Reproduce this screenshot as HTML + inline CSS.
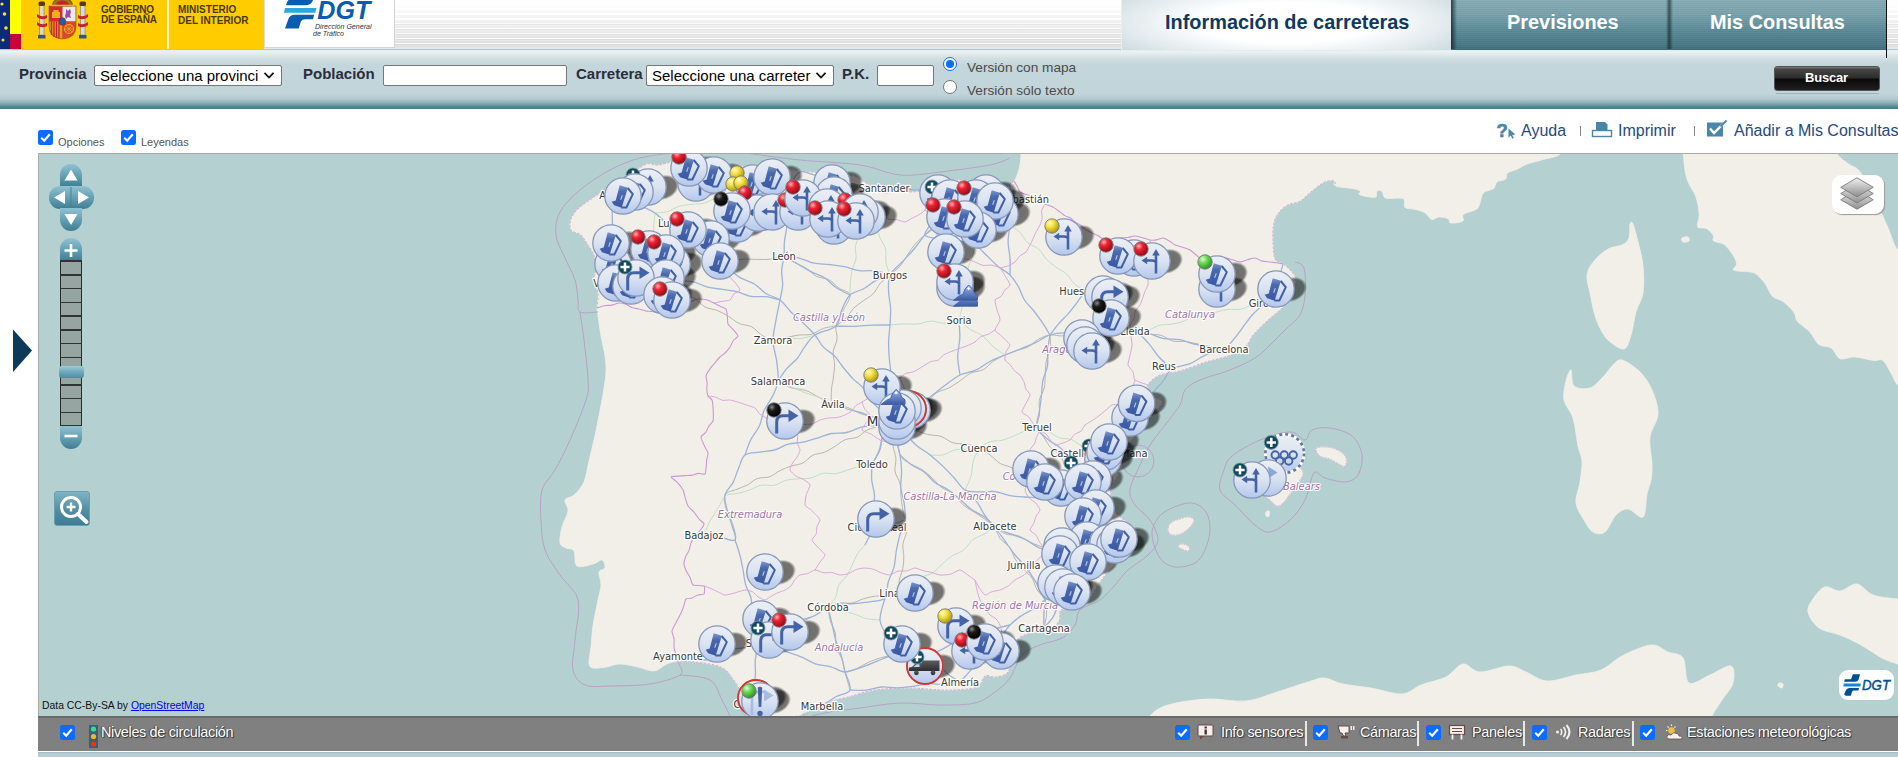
<!DOCTYPE html>
<html lang="es"><head><meta charset="utf-8"><title>DGT - Información de carreteras</title>
<style>
*{box-sizing:border-box;margin:0;padding:0}
html,body{width:1898px;height:757px;overflow:hidden;background:#fff;font-family:"Liberation Sans",Arial,sans-serif;}
.abs{position:absolute}
#hdr{position:absolute;left:0;top:0;width:1898px;height:49px;background:linear-gradient(180deg,rgba(255,255,255,1) 0px,rgba(255,255,255,.85) 10px,rgba(255,255,255,0) 46px),repeating-linear-gradient(180deg,#cfcfcf 0px,#e4e4e4 1.1px,#dcdcdc 3.3px,#fbfbfb 3.6px,#fbfbfb 4.9px);}
#hdrline{left:0;top:48px;width:1898px;height:2px;background:linear-gradient(180deg,#f4f4f4,#a9c5cc)}
#eu{left:0;top:0;width:10px;height:49px;background:#0a2a7a}
#yel1{left:10px;top:0;width:11px;height:34px;background:#ffff00}
#red1{left:10px;top:34px;width:11px;height:15px;background:#c8033a}
#gob{left:21px;top:0;width:243px;height:49px;background:#ffcc00}
#gobdiv{left:167px;top:0;width:2px;height:49px;background:#fff3c0}
.gtxt{font-size:10px;line-height:10.5px;color:#4a3a08;font-weight:bold;letter-spacing:-0.2px;white-space:nowrap}
#dgtbox{left:264px;top:0;width:131px;height:48px;background:#fff;border-right:1px solid #d4d4d4;border-bottom:1px solid #d4d4d4;border-left:1px solid #ddd}
#band{left:0;top:49px;width:1898px;height:60px;background:linear-gradient(180deg,#a9c5cc 0px,#b5cdd3 1px,#eef3f5 1.6px,#e6eef0 4px,#d3e0e4 9px,#c4d6db 16px,#c2d5da 44px,#b4cad0 50px,#7fa5b0 55px,#4f8190 58px,#4a7d8c 60px)}
#tabA{left:1121px;top:0;width:330px;height:50px;background:radial-gradient(ellipse 60% 90% at 50% 45%,#ffffff 0%,#ffffff 45%,#e3ebee 80%,#cfdde1 100%);border-left:1px solid #e8eef0}
.tabtxt{font-weight:bold;font-size:19.9px;white-space:nowrap;line-height:22px}
#tabB{left:1451px;top:0;width:435px;height:50px;background:linear-gradient(180deg,#8ab0b9 0%,#7ba4ae 30%,#5f8e9b 60%,#4d7b88 90%,#456f7c 100%)}
#tabBstripes{left:1451px;top:0;width:435px;height:50px;background:repeating-linear-gradient(180deg,rgba(255,255,255,0) 0px,rgba(255,255,255,0) 1px,rgba(0,0,0,0.05) 1px,rgba(0,0,0,0.05) 2px)}
.lbl{font-weight:bold;font-size:15px;color:#2b2d3b;white-space:nowrap;line-height:17px}
.sel{background:#fff;border:1px solid #767676;border-radius:2px;font-size:15px;color:#000;white-space:nowrap;overflow:hidden;line-height:19px;padding-left:5px}
.inp{background:#fff;border:1px solid #767676;border-radius:2px}
.rad{width:14px;height:14px;border-radius:50%;background:#fff;border:1px solid #767676}
.radtxt{font-size:13.65px;color:#4a4a4a;white-space:nowrap;line-height:16px}
.cb{width:15px;height:15px;border-radius:2.5px;background:#0b6cff}
.smalltxt{font-size:11px;color:#555;white-space:nowrap;line-height:12px}
.lnk{font-size:16px;color:#234a84;white-space:nowrap;line-height:18px}
#bbar{left:38px;top:716px;width:1860px;height:35px;background:#808080;border-top:2px solid #6a6a6a}
.btxt{font-size:14.4px;color:#fff;white-space:nowrap;line-height:16px;text-shadow:1px 1px 1px #333, -1px 0 1px #444;letter-spacing:-0.32px}
.bsep{width:2px;height:25px;top:721px;background:#e8e8e8}
#strip{left:38px;top:752px;width:1860px;height:5px;background:linear-gradient(180deg,#9db5bb 0px,#b3cbd1 1.5px,#b9d0d5 5px)}
</style></head>
<body>
<div id="hdr"></div><div class="abs" id="hdrline"></div>
<div class="abs" id="eu"></div><div class="abs" id="yel1"></div><div class="abs" id="red1"></div>
<div class="abs" id="gob"></div><div class="abs" id="gobdiv"></div>
<svg class="abs" style="left:0;top:0" width="10" height="49" viewBox="0 0 10 49"><g fill="#ffdd33"><circle cx="2" cy="4" r="1.6"/><circle cx="4.5" cy="14" r="1.8"/><circle cx="6" cy="28" r="1.8"/><circle cx="3" cy="40" r="1.5"/></g></svg>
<svg class="abs" style="left:36px;top:0" width="54" height="42" viewBox="0 0 54 42">
<g>
<rect x="3.5" y="5" width="4.5" height="30" fill="#d9d9d9" stroke="#777" stroke-width=".6"/>
<rect x="44.5" y="5" width="4.5" height="30" fill="#d9d9d9" stroke="#777" stroke-width=".6"/>
<rect x="2" y="35" width="7.5" height="3.5" fill="#2f5590"/><rect x="43" y="35" width="7.5" height="3.5" fill="#2f5590"/>
<rect x="2.5" y="1.5" width="6.5" height="4.5" rx="1.5" fill="#5a3a10"/><rect x="43.5" y="1.5" width="6.5" height="4.5" rx="1.5" fill="#5a3a10"/>
<path d="M1 14 Q6 18 11 15 L11 18 Q6 21 1 17Z" fill="#c8202e"/><path d="M1 22 Q6 26 11 23 L11 26 Q6 29 1 25Z" fill="#c8202e"/>
<path d="M42 15 Q47 18 52 14 L52 17 Q47 21 42 18Z" fill="#c8202e"/><path d="M42 23 Q47 26 52 22 L52 25 Q47 29 42 26Z" fill="#c8202e"/>
<path d="M13 6 H40 V26 Q40 38 26.5 39 Q13 38 13 26Z" fill="#d33" stroke="#8a6a1a" stroke-width=".7"/>
<rect x="13.5" y="6.5" width="13" height="15" fill="#d42a2a"/>
<rect x="26.5" y="6.5" width="13" height="15" fill="#ece7ee"/>
<path d="M13.5 21.5 H26.5 V38.5 Q14 37 13.5 26Z" fill="#e0a020"/>
<path d="M15.5 21.5V35 M18 21.5V37 M20.5 21.5V38 M23 21.5V38.5" stroke="#c8202e" stroke-width="1.3"/>
<path d="M26.5 21.5 H39.5 V26 Q39 37 26.5 38.5Z" fill="#d8482a"/>
<circle cx="33" cy="29" r="4.5" fill="none" stroke="#e8b020" stroke-width="1.2"/>
<path d="M29 29H37M33 25V33M30 26L36 32M36 26L30 32" stroke="#e8b020" stroke-width=".7"/>
<path d="M17.5 10 h5 v2 h1.5 v6 h-8 v-6 h1.5z" fill="#e8b020"/>
<path d="M30 9 l2 2 2-2 1 3 -1 3 1 3 -3-1 -2 2 -1-3 1-3z" fill="#9a4aa0"/>
<ellipse cx="26.5" cy="21.5" rx="3.2" ry="3.8" fill="#2a5aa8" stroke="#8a1a1a" stroke-width=".6"/>
<path d="M17 6 Q15 -1 26.5 -2 Q38 -1 36 6Z" fill="#9a7418" stroke="#6a4a10" stroke-width=".7"/><path d="M20 5 Q20 1 26.5 0.5 Q33 1 33 5Z" fill="#c8202e"/>
<path d="M15.5 5.5H37.5" stroke="#e8b020" stroke-width="1.6"/>
</g></svg>
<div class="abs gtxt" style="left:101px;top:5px;line-height:10.1px">GOBIERNO<br>DE ESPAÑA</div>
<div class="abs gtxt" style="left:178px;top:3.5px;line-height:11.8px;letter-spacing:0">MINISTERIO<br>DEL INTERIOR</div>
<div class="abs" id="dgtbox"></div>
<svg class="abs" style="left:264px;top:0" width="131" height="48" viewBox="0 0 131 48">
<path d="M22.5 0 H49 Q47.5 5.3 41 5.3 H22 Q22.5 2 24.5 0Z" fill="#0a5cb0"/>
<path d="M21 8.1 H52.4 L51.3 12.7 H19.9Z" fill="#29a9e0"/>
<path d="M50.2 14.8 H31 Q25.5 15 24.3 19.2 L21 28.4 H34.7 L36.9 21.4 Q38 19.2 41.3 19.2 H49Z" fill="#0a5cb0"/>
<text x="53.3" y="19.3" font-family="Liberation Sans,Arial,sans-serif" font-weight="bold" font-style="italic" font-size="25" fill="#0a5cb0" textLength="53" lengthAdjust="spacingAndGlyphs">DGT</text>
<text x="51" y="28.6" font-family="Liberation Sans,Arial,sans-serif" font-style="italic" font-size="7" fill="#333" textLength="56.5" lengthAdjust="spacingAndGlyphs">Dirección General</text>
<text x="49" y="36" font-family="Liberation Sans,Arial,sans-serif" font-style="italic" font-size="7" fill="#333" textLength="31" lengthAdjust="spacingAndGlyphs">de Tráfico</text>
</svg>
<div class="abs" id="band"></div>
<div class="abs" id="tabA"></div>
<div class="abs tabtxt" style="left:1165px;top:11px;color:#0f3a5c">Información de carreteras</div>
<div class="abs" id="tabB"></div><div class="abs" id="tabBstripes"></div>
<div class="abs" style="left:1451px;top:0;width:6px;height:49px;background:linear-gradient(90deg,rgba(10,25,30,.75),rgba(10,25,30,0))"></div>
<div class="abs" style="left:1666px;top:0;width:7px;height:49px;background:linear-gradient(90deg,rgba(10,25,30,0),rgba(10,25,30,.6) 45%,rgba(10,25,30,0))"></div>
<div class="abs" style="left:1886px;top:0;width:1px;height:58px;background:#111"></div>
<div class="abs tabtxt" style="left:1507px;top:11px;color:#fff">Previsiones</div>
<div class="abs tabtxt" style="left:1710px;top:11px;color:#fff">Mis Consultas</div>
<div class="abs lbl" style="left:19px;top:65px">Provincia</div>
<div class="abs sel" style="left:94px;top:65px;width:188px;height:21px">Seleccione una provinci</div>
<svg class="abs" style="left:263px;top:71px" width="12" height="9" viewBox="0 0 12 9"><path d="M1.5 1.8 L6 6.5 L10.5 1.8" fill="none" stroke="#111" stroke-width="1.8"/></svg>
<div class="abs lbl" style="left:303px;top:65px">Población</div>
<div class="abs inp" style="left:383px;top:65px;width:184px;height:21px"></div>
<div class="abs lbl" style="left:576px;top:65px">Carretera</div>
<div class="abs sel" style="left:646px;top:65px;width:188px;height:21px">Seleccione una carreter</div>
<svg class="abs" style="left:815px;top:71px" width="12" height="9" viewBox="0 0 12 9"><path d="M1.5 1.8 L6 6.5 L10.5 1.8" fill="none" stroke="#111" stroke-width="1.8"/></svg>
<div class="abs lbl" style="left:842px;top:65px">P.K.</div>
<div class="abs inp" style="left:877px;top:65px;width:57px;height:21px"></div>
<div class="abs rad" style="left:943px;top:57px;border:1.5px solid #0b6cff"><div class="abs" style="left:1.5px;top:1.5px;width:8px;height:8px;border-radius:50%;background:#0b6cff"></div></div>
<div class="abs rad" style="left:943px;top:80px"></div>
<div class="abs radtxt" style="left:967px;top:60px">Versión con mapa</div>
<div class="abs radtxt" style="left:967px;top:83px">Versión sólo texto</div>
<div class="abs" style="left:1774px;top:66px;width:106px;height:25px;border-radius:3px;border:1px solid #555;background:linear-gradient(180deg,#7c7c7c 0%,#454545 10%,#2c2c2c 48%,#0a0a0a 52%,#1e1e1e 100%)"></div>
<div class="abs" style="left:1776px;top:93px;width:103px;height:1px;background:#9fb2b8"></div>
<div class="abs" style="left:1805px;top:70px;font-weight:bold;font-size:13px;color:#fff;line-height:16px;letter-spacing:-0.2px">Buscar</div>
<div class="abs cb" style="left:38px;top:130px"><svg class="abs" style="left:0;top:0" width="15" height="15" viewBox="0 0 15 15"><path d="M3.2 7.8 L6.2 10.8 L11.8 4.2" fill="none" stroke="#fff" stroke-width="2.1" stroke-linecap="butt" stroke-linejoin="miter"/></svg></div>
<div class="abs smalltxt" style="left:58px;top:136px">Opciones</div>
<div class="abs cb" style="left:121px;top:130px"><svg class="abs" style="left:0;top:0" width="15" height="15" viewBox="0 0 15 15"><path d="M3.2 7.8 L6.2 10.8 L11.8 4.2" fill="none" stroke="#fff" stroke-width="2.1" stroke-linecap="butt" stroke-linejoin="miter"/></svg></div>
<div class="abs smalltxt" style="left:141px;top:136px">Leyendas</div>
<svg class="abs" style="left:1496px;top:121px" width="22" height="19" viewBox="0 0 22 19">
<text x="0.5" y="15.8" font-family="Liberation Sans,Arial,sans-serif" font-weight="bold" font-size="18.5" fill="#4a86a8" stroke="#4a86a8" stroke-width="0.6">?</text>
<path d="M12.5 7.5 L12.5 16.5 L14.8 14.6 L16.3 17.8 L17.8 17.1 L16.3 14 L19.3 13.6Z" fill="#4a86a8"/></svg>
<div class="abs lnk" style="left:1521px;top:122px">Ayuda</div>
<div class="abs" style="left:1580px;top:126px;width:1px;height:10px;background:#888"></div>
<svg class="abs" style="left:1591px;top:121px" width="22" height="17" viewBox="0 0 22 17">
<path d="M5 1 H14 L16.5 3.5 V9 H5Z" fill="#4a86a8"/><rect x="1.5" y="9.5" width="19" height="6" fill="#fff" stroke="#4a86a8" stroke-width="1.4"/></svg>
<div class="abs lnk" style="left:1618px;top:122px">Imprimir</div>
<div class="abs" style="left:1694px;top:126px;width:1px;height:10px;background:#888"></div>
<svg class="abs" style="left:1706px;top:120px" width="23" height="18" viewBox="0 0 23 18">
<rect x="1" y="2.5" width="16" height="14" fill="#4a86a8"/><path d="M4 8.5 L8 13 L20 1" fill="none" stroke="#fff" stroke-width="2.4"/><path d="M14.5 6.5 L20.5 .5" fill="none" stroke="#4a86a8" stroke-width="2"/></svg>
<div class="abs lnk" style="left:1734px;top:122px">Añadir a Mis Consultas</div>
<svg class="abs" style="left:12px;top:328px" width="22" height="46" viewBox="0 0 22 46"><path d="M1 1.5 L20 22.5 L1 44Z" fill="#0e3a5a"/></svg>
<svg class="abs" style="left:38px;top:153px" width="1860" height="563" viewBox="38 153 1860 563">

<defs>
<linearGradient id="mg" x1="0" y1="0" x2="0" y2="1"><stop offset="0" stop-color="#eceff5"/><stop offset="0.5" stop-color="#dbe3f1"/><stop offset="1" stop-color="#b3c7ed"/></linearGradient>
<radialGradient id="shg" cx="0.5" cy="0.5" r="0.5"><stop offset="0" stop-color="#000" stop-opacity=".55"/><stop offset="0.8" stop-color="#000" stop-opacity=".52"/><stop offset="1" stop-color="#000" stop-opacity="0"/></radialGradient>
<radialGradient id="br" cx="0.35" cy="0.3" r="0.75"><stop offset="0" stop-color="#ffb0b0"/><stop offset="0.35" stop-color="#ee2233"/><stop offset="1" stop-color="#8a0a14"/></radialGradient>
<radialGradient id="by" cx="0.35" cy="0.3" r="0.75"><stop offset="0" stop-color="#fffbc0"/><stop offset="0.4" stop-color="#f3df40"/><stop offset="1" stop-color="#a8900c"/></radialGradient>
<radialGradient id="bk" cx="0.35" cy="0.3" r="0.75"><stop offset="0" stop-color="#8a8a8a"/><stop offset="0.35" stop-color="#1a1a1a"/><stop offset="1" stop-color="#000"/></radialGradient>
<radialGradient id="bg" cx="0.35" cy="0.3" r="0.75"><stop offset="0" stop-color="#d8ffd0"/><stop offset="0.4" stop-color="#6ad850"/><stop offset="1" stop-color="#2a8a20"/></radialGradient>
<linearGradient id="iwg" gradientUnits="userSpaceOnUse" x1="0" y1="-11" x2="0" y2="12"><stop offset="0" stop-color="#7f97cc"/><stop offset="0.3" stop-color="#4a69ae"/><stop offset="1" stop-color="#3a58a2"/></linearGradient>
<linearGradient id="trg" x1="0" y1="0" x2="0" y2="1"><stop offset="0" stop-color="#5a5c5e"/><stop offset="1" stop-color="#2c2d2f"/></linearGradient>
<linearGradient id="mtg" x1="0" y1="0" x2="0" y2="1"><stop offset="0" stop-color="#a9bce4"/><stop offset="0.45" stop-color="#6f8bc8"/><stop offset="1" stop-color="#3b5aa4"/></linearGradient>
<g id="sh"><ellipse cx="15" cy="0.5" rx="16.5" ry="12.2" fill="url(#shg)" transform="rotate(-20 15 0.5)"/></g>
<g id="mk"><circle r="18.2" fill="url(#mg)" stroke="#8797b7" stroke-width="1.3"/></g>
<g id="iw"><path d="M-3.3 -10.8 L4.9 -8.2 L-0.5 9 L-1.3 11.7 L-8.9 9.3 L-11.3 5.7 L-7.3 4.6 Z" fill="url(#iwg)"/><path d="M4.7 -8 L9.8 -1.9 L3.4 11.5 L-1.7 11.5" fill="none" stroke="#4060a6" stroke-width="2" stroke-linejoin="round"/><path d="M-0.7 -0.8 L-2.3 3.8" stroke="#b9c8e8" stroke-width="1.1"/></g>
<g id="ij" fill="none" stroke="#4463a6" stroke-width="2.6"><path d="M4 12.5 V-6.5"/><path d="M4 2 Q4 -0.5 0 -0.5 H-6"/><path d="M4 -12 L7.8 -5.5 H0.2Z" fill="#4463a6" stroke="none"/><path d="M-10.5 -0.5 L-4.8 -4.3 V3.3Z" fill="#4463a6" stroke="none"/></g>
<g id="ir" fill="none" stroke="#4463a6" stroke-width="3"><path d="M-8.3 12.5 V1 Q-8.3 -5.2 -2 -5.2 H5"/><path d="M13.5 -5.2 L3.5 -11.5 V1Z" fill="#4463a6" stroke="none"/></g>
<g id="iu" fill="none" stroke="#4463a6" stroke-width="2.6"><path d="M2 12 V-6"/><path d="M2 -12 L5.8 -5.5 H-1.8Z" fill="#4463a6" stroke="none"/></g>
<g id="ir2" fill="#8fa6d8"><path d="M0 -11.5 L9.5 -5.5 L1.5 -0.5Z"/></g>
<g id="pl"><circle r="7" fill="#0f4a60" stroke="#7f9494" stroke-width="0.8"/><path d="M-4.6 0H4.6M0 -4.6V4.6" stroke="#fff" stroke-width="2.5"/></g>
<g id="mt"><path d="M0 15.2 L5.6 10.9 L9.6 9.2 L11.6 4 L15.2 0 L19.5 4.6 L20.8 8 L24 10.5 V15.2Z" fill="url(#mtg)" stroke="#3f5ea8" stroke-width="0.9" stroke-linejoin="round"/><path d="M12.8 4.3 L15.2 1.8 L17.8 4.6 L16.2 4 L15 5.4 L14 4Z" fill="#f4f7fc"/></g>
</defs>

<rect x="38" y="153" width="1860" height="563" fill="#b5d0d0"/>
<path d="M1565 135 C1521.6 129.4 1390.7 120 1300 120 C1209.3 120 1067.5 129.2 1021 135 C974.5 140.8 1021.3 149.3 1021 155 C1020.7 160.7 1020.2 164.7 1019 169 C1017.8 173.3 1016.3 178.2 1014 181 C1011.7 183.8 1008.2 186.2 1005 186 C1001.8 185.8 998.3 180.5 995 180 C991.7 179.5 989.2 182.8 985 183 C980.8 183.2 975 181.5 970 181 C965 180.5 960 179.7 955 180 C950 180.3 945 181.3 940 183 C935 184.7 930 188.5 925 190 C920 191.5 914.5 192 910 192 C905.5 192 902 189.8 898 190 C894 190.2 890.7 193.7 886 193 C881.3 192.3 873.8 188 870 186 C866.2 184 865.8 182.7 863 181 C860.2 179.3 858.5 177.3 853 176 C847.5 174.7 837.2 173.7 830 173 C822.8 172.3 816.5 172.5 810 172 C803.5 171.5 797.7 171 791 170 C784.3 169 776.8 166.3 770 166 C763.2 165.7 755.8 168.2 750 168 C744.2 167.8 740 165.3 735 165 C730 164.7 725 166.8 720 166 C715 165.2 710 161.3 705 160 C700 158.7 694.2 158.7 690 158 C685.8 157.3 682.8 155.5 680 156 C677.2 156.5 676.7 159.5 673 161 C669.3 162.5 662.3 164.5 658 165 C653.7 165.5 650.8 163 647 164 C643.2 165 638.7 169 635 171 C631.3 173 628.3 174 625 176 C621.7 178 619.2 180.2 615 183 C610.8 185.8 604.2 190.2 600 193 C595.8 195.8 593.7 197.3 590 200 C586.3 202.7 581.2 205.8 578 209 C574.8 212.2 572.2 215.5 571 219 C569.8 222.5 569.3 227.3 571 230 C572.7 232.7 578.2 232.5 581 235 C583.8 237.5 585.8 241.7 588 245 C590.2 248.3 592.7 251.2 594 255 C595.3 258.8 596 263.8 596 268 C596 272.2 593.7 275.8 594 280 C594.3 284.2 597.5 288.3 598 293 C598.5 297.7 597 304.2 597 308 C597 311.8 597.3 311.3 598 316 C598.7 320.7 599.8 329.3 601 336 C602.2 342.7 604.2 350 605 356 C605.8 362 606.2 366.7 606 372 C605.8 377.3 604.7 383.3 604 388 C603.3 392.7 603 394.5 602 400 C601 405.5 599.3 414.3 598 421 C596.7 427.7 595.5 433.3 594 440 C592.5 446.7 590.7 454 589 461 C587.3 468 586.5 476.3 584 482 C581.5 487.7 577.2 492 574 495 C570.8 498 566 497.3 565 500 C564 502.7 568.5 506.5 568 511 C567.5 515.5 563.3 521.7 562 527 C560.7 532.3 559.3 539.5 560 543 C560.7 546.5 563.7 546.7 566 548 C568.3 549.3 572.2 548 574 551 C575.8 554 573.8 563.8 577 566 C580.2 568.2 588.8 565 593 564 C597.2 563 600 559.3 602 560 C604 560.7 605.5 566 605 568 C604.5 570 599.7 569.2 599 572 C598.3 574.8 601.2 580.3 601 585 C600.8 589.7 599.3 593.2 598 600 C596.7 606.8 594.2 618.2 593 626 C591.8 633.8 591.7 640.8 591 647 C590.3 653.2 588.7 659.5 589 663 C589.3 666.5 590.2 667.3 593 668 C595.8 668.7 601.5 667.7 606 667 C610.5 666.3 614.7 664 620 664 C625.3 664 632.3 665.8 638 667 C643.7 668.2 649.2 671.5 654 671 C658.8 670.5 662.7 665.7 667 664 C671.3 662.3 673.8 661.2 680 661 C686.2 660.8 696.8 661.8 704 663 C711.2 664.2 718.2 665.3 723 668 C727.8 670.7 730.3 675.5 733 679 C735.7 682.5 737.7 685.2 739 689 C740.3 692.8 739.5 697.5 741 702 C742.5 706.5 746.2 710.5 748 716 C749.8 721.5 743.7 731.8 752 735 C760.3 738.2 790 738.2 798 735 C806 731.8 797.7 720.2 800 716 C802.3 711.8 807.3 712.3 812 710 C816.7 707.7 822 704.2 828 702 C834 699.8 840.2 699 848 697 C855.8 695 864.7 691.5 875 690 C885.3 688.5 898.8 688 910 688 C921.2 688 932.5 689.8 942 690 C951.5 690.2 960.8 689.7 967 689 C973.2 688.3 976 688.2 979 686 C982 683.8 982.2 677.5 985 676 C987.8 674.5 992.2 677.7 996 677 C999.8 676.3 1005.3 675.7 1008 672 C1010.7 668.3 1010.5 660.3 1012 655 C1013.5 649.7 1014 643.7 1017 640 C1020 636.3 1024.7 634.5 1030 633 C1035.3 631.5 1044.2 633 1049 631 C1053.8 629 1057 624.5 1059 621 C1061 617.5 1058.3 612.2 1061 610 C1063.7 607.8 1070.2 610 1075 608 C1079.8 606 1086.2 601.8 1090 598 C1093.8 594.2 1095.2 589.2 1098 585 C1100.8 580.8 1103.3 577.2 1107 573 C1110.7 568.8 1115.3 564.2 1120 560 C1124.7 555.8 1131.7 551.7 1135 548 C1138.3 544.3 1140.7 541.7 1140 538 C1139.3 534.3 1134.8 530 1131 526 C1127.2 522 1120.3 517.8 1117 514 C1113.7 510.2 1112 507.3 1111 503 C1110 498.7 1110 492.3 1111 488 C1112 483.7 1115.2 481.3 1117 477 C1118.8 472.7 1120.2 467.3 1122 462 C1123.8 456.7 1124.5 450.8 1128 445 C1131.5 439.2 1138.7 432.3 1143 427 C1147.3 421.7 1150.8 417.2 1154 413 C1157.2 408.8 1162.3 405 1162 402 C1161.7 399 1154.3 397.8 1152 395 C1149.7 392.2 1146.7 388.3 1148 385 C1149.3 381.7 1154.7 377.3 1160 375 C1165.3 372.7 1172.3 373.2 1180 371 C1187.7 368.8 1197.5 364.7 1206 362 C1214.5 359.3 1224.3 357.7 1231 355 C1237.7 352.3 1242.3 349.3 1246 346 C1249.7 342.7 1249.5 339.2 1253 335 C1256.5 330.8 1262 325.7 1267 321 C1272 316.3 1279.2 311.3 1283 307 C1286.8 302.7 1287.8 299.5 1290 295 C1292.2 290.5 1296 284.2 1296 280 C1296 275.8 1292.2 272.7 1290 270 C1287.8 267.3 1285.5 265.8 1283 264 C1280.5 262.2 1276.7 263.1 1275 259 C1273.3 254.9 1273.1 245.2 1272.9 239.3 C1272.7 233.5 1272.9 228.2 1273.7 223.9 C1274.5 219.6 1275.7 216.8 1278 213.6 C1280.3 210.4 1283.9 207 1287.5 205 C1291.1 203 1295.8 203.5 1299.5 201.5 C1303.2 199.5 1305.8 196.1 1309.8 192.9 C1313.8 189.8 1319.6 184.6 1323.6 182.6 C1327.6 180.6 1331.9 180.3 1333.9 180.9 C1335.9 181.5 1332.4 184.8 1335.6 186.1 C1338.8 187.4 1348.6 187.8 1352.8 188.6 C1357 189.4 1359.4 190.2 1360.5 191.2 C1361.6 192.2 1357.2 193.7 1359.6 194.7 C1362 195.7 1372.2 197.8 1375.1 197.2 C1378 196.6 1375.6 192.2 1376.8 191.2 C1378 190.2 1380.6 190 1382 191.2 C1383.4 192.3 1382.6 196.9 1385.4 198.1 C1388.2 199.2 1395.9 197.8 1399.1 198.1 C1402.2 198.4 1403.3 198.2 1404.3 199.8 C1405.3 201.4 1403.4 205.9 1405.1 207.5 C1406.8 209.1 1411.3 208.4 1414.6 209.3 C1417.9 210.2 1422 211 1424.9 212.7 C1427.8 214.4 1429.5 218.9 1431.8 219.6 C1434.1 220.3 1435.9 217.2 1438.6 217 C1441.3 216.8 1446.1 217.7 1448.1 218.7 C1450.1 219.7 1448.3 222.6 1450.7 223 C1453.1 223.4 1460.6 222.7 1462.7 221.3 C1464.8 219.9 1461.2 216.4 1463.5 214.4 C1465.8 212.4 1473.7 211.2 1476.4 209.3 C1479.1 207.4 1478.8 205.9 1479.9 203.2 C1481.1 200.5 1481 195.3 1483.3 192.9 C1485.6 190.5 1491.3 190.4 1493.6 188.6 C1495.9 186.8 1495 183.4 1497 181.8 C1499 180.2 1503.9 180.6 1505.6 179.2 C1507.3 177.8 1505.3 174.9 1507.3 173.2 C1509.3 171.5 1514.2 170.5 1517.6 168.9 C1521 167.3 1523.6 165.3 1527.9 163.7 C1532.2 162.1 1538 161.1 1543.4 159.4 C1548.9 157.7 1557 157.5 1560.6 153.4 C1564.2 149.3 1608.4 140.6 1565 135Z" fill="#f2efe9" stroke="#f2efe9" stroke-width="0.8" stroke-linejoin="round"/>
<path d="M1680 135 C1655.5 138.1 1681.9 146.3 1683 153.6 C1684.1 160.8 1684.7 171.4 1686.8 178.5 C1688.9 185.6 1693.6 190.5 1695.7 196.4 C1697.8 202.3 1698.9 209.1 1699.2 214.2 C1699.5 219.2 1696.3 224.3 1697.5 226.7 C1698.7 229.1 1703.7 227 1706.4 228.5 C1709.1 230 1712.3 233.5 1713.5 235.6 C1714.7 237.7 1711.7 239.5 1713.5 241 C1715.3 242.5 1720.9 242.1 1724.2 244.5 C1727.5 246.9 1731 251.9 1733.1 255.2 C1735.2 258.5 1736.7 261.8 1736.7 264.2 C1736.7 266.6 1732.5 268.3 1733.1 269.5 C1733.7 270.7 1736.7 270.7 1740.3 271.3 C1743.9 271.9 1750.3 271 1754.5 273.1 C1758.7 275.2 1762.2 279.9 1765.2 283.8 C1768.2 287.7 1769.4 293.3 1772.4 296.3 C1775.4 299.3 1779.5 298.9 1783.1 301.6 C1786.7 304.3 1791.4 309 1793.8 312.3 C1796.2 315.6 1794.7 317.9 1797.4 321.2 C1800.1 324.5 1806.2 328.1 1809.8 332 C1813.4 335.9 1815.2 341.7 1818.8 344.4 C1822.4 347.1 1827.6 345.6 1831.2 348 C1834.8 350.4 1836.3 357.2 1840.2 358.7 C1844.1 360.2 1848.8 356.6 1854.4 356.9 C1860 357.2 1869.2 359.9 1874 360.5 C1878.8 361.1 1880 358.1 1883 360.5 C1886 362.9 1889.4 370.6 1891.9 374.8 C1894.4 379 1894.2 381.3 1898 385.5 C1901.8 389.7 1912.2 421.8 1915 400 C1917.8 378.2 1917.8 280 1915 255 C1912.2 230 1902.5 254.4 1898 250 C1893.5 245.6 1892.3 237.4 1888.3 228.5 C1884.3 219.6 1878.8 205.9 1874 196.4 C1869.2 186.9 1864 176.8 1859.8 171.4 C1855.6 166.1 1853 167.3 1849.1 164.3 C1845.2 161.3 1839.8 158.5 1836.6 153.6 C1833.4 148.7 1856.1 138.1 1830 135 C1803.9 131.9 1704.5 131.9 1680 135Z" fill="#f2efe9" stroke="#f2efe9" stroke-width="0.8" stroke-linejoin="round"/>
<path d="M1140 735 C1047.5 731.8 1145.3 721 1150 716 C1154.7 711 1158.5 707.8 1168 705 C1177.5 702.2 1194 699.7 1207 699 C1220 698.3 1234.3 702.2 1246 701 C1257.7 699.8 1266.7 695.2 1277 692 C1287.3 688.8 1300.2 684.3 1308 682 C1315.8 679.7 1318.2 677.7 1324 678 C1329.8 678.3 1335.2 682.3 1343 684 C1350.8 685.7 1361.2 686.3 1371 688 C1380.8 689.7 1393.7 694.5 1402 694 C1410.3 693.5 1413.7 687.8 1421 685 C1428.3 682.2 1439 680.5 1446 677 C1453 673.5 1457.3 664.8 1463 664 C1468.7 663.2 1472.3 671.7 1480 672 C1487.7 672.3 1501.3 666 1509 666 C1516.7 666 1519.7 669.5 1526 672 C1532.3 674.5 1538.7 680.5 1547 681 C1555.3 681.5 1567 676.8 1576 675 C1585 673.2 1593.3 673.2 1601 670 C1608.7 666.8 1613.7 660.2 1622 656 C1630.3 651.8 1643.3 645.7 1651 645 C1658.7 644.3 1662.7 649.8 1668 652 C1673.3 654.2 1679.5 652.8 1683 658 C1686.5 663.2 1684.5 680.2 1689 683 C1693.5 685.8 1703 677.8 1710 675 C1717 672.2 1727.2 664.7 1731 666 C1734.8 667.3 1734.5 677.3 1733 683 C1731.5 688.7 1725.5 694.5 1722 700 C1718.5 705.5 1714.8 710.2 1712 716 C1709.2 721.8 1800.3 731.8 1705 735 C1609.7 738.2 1232.5 738.2 1140 735Z" fill="#f2efe9" stroke="#f2efe9" stroke-width="0.8" stroke-linejoin="round"/>
<path d="M1915 600 C1912.2 588.5 1905 599.8 1898 599 C1891 598.2 1879.8 597.5 1873 595 C1866.2 592.5 1862.5 584.7 1857 584 C1851.5 583.3 1845.3 590.5 1840 591 C1834.7 591.5 1829.5 585.7 1825 587 C1820.5 588.3 1815.8 594.8 1813 599 C1810.2 603.2 1807 607.2 1808 612 C1809 616.8 1813.7 624.2 1819 628 C1824.3 631.8 1833 632.2 1840 635 C1847 637.8 1854 641.2 1861 645 C1868 648.8 1875.8 654.8 1882 658 C1888.2 661.2 1892.5 662.3 1898 664 C1903.5 665.7 1912.2 678.7 1915 668 C1917.8 657.3 1917.8 611.5 1915 600Z" fill="#f2efe9" stroke="#f2efe9" stroke-width="0.8" stroke-linejoin="round"/>
<path d="M1633 224 C1634.3 227 1636.3 235 1638 242 C1639.7 249 1642.2 257.5 1643 266 C1643.8 274.5 1644.2 285.3 1643 293 C1641.8 300.7 1638 305 1636 312 C1634 319 1633 328.8 1631 335 C1629 341.2 1627.8 348.2 1624 349 C1620.2 349.8 1612.2 343.8 1608 340 C1603.8 336.2 1601.3 330.7 1599 326 C1596.7 321.3 1595.5 317.5 1594 312 C1592.5 306.5 1591.2 299.2 1590 293 C1588.8 286.8 1586.3 280.3 1587 275 C1587.7 269.7 1590.5 265.3 1594 261 C1597.5 256.7 1603.3 251.7 1608 249 C1612.7 246.3 1618.5 246.8 1622 245 C1625.5 243.2 1627.7 241.5 1629 238 C1630.3 234.5 1629.3 226.3 1630 224 C1630.7 221.7 1631.7 221 1633 224Z" fill="#f2efe9" stroke="#f2efe9" stroke-width="0.8" stroke-linejoin="round"/>
<path d="M1622 360 C1626.5 361.2 1635 367 1640 372 C1645 377 1649 383 1652 390 C1655 397 1658.3 406.2 1658 414 C1657.7 421.8 1651 428.7 1650 437 C1649 445.3 1651.8 456.8 1652 464 C1652.2 471.2 1651.8 475 1651 480 C1650.2 485 1648.3 487.8 1647 494 C1645.7 500.2 1646.2 514.5 1643 517 C1639.8 519.5 1632.5 509.3 1628 509 C1623.5 508.7 1619.8 511.2 1616 515 C1612.2 518.8 1608.8 529.2 1605 532 C1601.2 534.8 1596.5 534 1593 532 C1589.5 530 1586.8 524.8 1584 520 C1581.2 515.2 1576.7 509.3 1576 503 C1575.3 496.7 1579 489 1580 482 C1581 475 1582.3 467 1582 461 C1581.7 455 1579.5 453.2 1578 446 C1576.5 438.8 1575.3 425.7 1573 418 C1570.7 410.3 1565.2 406.2 1564 400 C1562.8 393.8 1564.8 386 1566 381 C1567.2 376 1569.7 369.2 1571 370 C1572.3 370.8 1570.8 383 1574 386 C1577.2 389 1585.2 389.5 1590 388 C1594.8 386.5 1599.2 380.8 1603 377 C1606.8 373.2 1609.8 367.8 1613 365 C1616.2 362.2 1617.5 358.8 1622 360Z" fill="#f2efe9" stroke="#f2efe9" stroke-width="0.8" stroke-linejoin="round"/>
<path d="M1238 487 C1238 484.3 1241.7 480.8 1245 478 C1248.3 475.2 1253.5 472.7 1258 470 C1262.5 467.3 1267.5 464.3 1272 462 C1276.5 459.7 1281 457.2 1285 456 C1289 454.8 1294.7 453.8 1296 455 C1297.3 456.2 1292.5 461.2 1293 463 C1293.5 464.8 1297.3 464.2 1299 466 C1300.7 467.8 1303.3 471 1303 474 C1302.7 477 1299.2 480.7 1297 484 C1294.8 487.3 1292.3 490.8 1290 494 C1287.7 497.2 1285.2 501 1283 503 C1280.8 505 1279.2 506.5 1277 506 C1274.8 505.5 1272.5 502 1270 500 C1267.5 498 1264.3 495.5 1262 494 C1259.7 492.5 1257.7 490.7 1256 491 C1254.3 491.3 1253.8 495.5 1252 496 C1250.2 496.5 1247.3 495.5 1245 494 C1242.7 492.5 1238 489.7 1238 487Z" fill="#f2efe9" stroke="#f2efe9" stroke-width="0.8" stroke-linejoin="round"/>
<path d="M1316 449 C1316.3 447.5 1319.3 447.2 1322 447 C1324.7 446.8 1328.8 447.2 1332 448 C1335.2 448.8 1338.7 450.3 1341 452 C1343.3 453.7 1345.3 455.7 1346 458 C1346.7 460.3 1346.2 465 1345 466 C1343.8 467 1341.5 465.2 1339 464 C1336.5 462.8 1333.2 460.3 1330 459 C1326.8 457.7 1322.3 457.7 1320 456 C1317.7 454.3 1315.7 450.5 1316 449Z" fill="#f2efe9" stroke="#f2efe9" stroke-width="0.8" stroke-linejoin="round"/>
<path d="M1168 528 C1168.3 526 1170 523.5 1172 522 C1174 520.5 1177.3 519.8 1180 519 C1182.7 518.2 1185.7 516.8 1188 517 C1190.3 517.2 1193.7 518.3 1194 520 C1194.3 521.7 1191.7 525 1190 527 C1188.3 529 1186.2 530.7 1184 532 C1181.8 533.3 1179.3 534.7 1177 535 C1174.7 535.3 1171.5 535.2 1170 534 C1168.5 532.8 1167.7 530 1168 528Z" fill="#f2efe9" stroke="#f2efe9" stroke-width="0.8" stroke-linejoin="round"/>
<path d="M1178 546 C1178.2 545.2 1181.2 543.8 1183 544 C1184.8 544.2 1188.2 545.8 1189 547 C1189.8 548.2 1189.2 550.7 1188 551 C1186.8 551.3 1183.7 549.8 1182 549 C1180.3 548.2 1177.8 546.8 1178 546Z" fill="#f2efe9" stroke="#f2efe9" stroke-width="0.8" stroke-linejoin="round"/>
<path d="M1682 238 C1682.8 237.2 1686.8 236.5 1688 237 C1689.2 237.5 1689.8 240.2 1689 241 C1688.2 241.8 1684.2 242.5 1683 242 C1681.8 241.5 1681.2 238.8 1682 238Z" fill="#f2efe9" stroke="#f2efe9" stroke-width="0.8" stroke-linejoin="round"/>
<path d="M1779 683 C1779.8 682.7 1782.5 683.2 1783 684 C1783.5 684.8 1782.8 687.7 1782 688 C1781.2 688.3 1778.5 686.8 1778 686 C1777.5 685.2 1778.2 683.3 1779 683Z" fill="#f2efe9" stroke="#f2efe9" stroke-width="0.8" stroke-linejoin="round"/>
<path d="M1266 512 C1266.5 511.2 1268.5 510.3 1269 511 C1269.5 511.7 1269.5 515.2 1269 516 C1268.5 516.8 1266.5 516.7 1266 516 C1265.5 515.3 1265.5 512.8 1266 512Z" fill="#f2efe9" stroke="#f2efe9" stroke-width="0.8" stroke-linejoin="round"/>
<path d="M673 153 C667.5 153.8 650.5 155.2 640 158 C629.5 160.8 620 164.7 610 170 C600 175.3 588.3 183 580 190 C571.7 197 564 204.5 560 212 C556 219.5 555.2 227.3 556 235 C556.8 242.7 561.8 250.5 565 258 C568.2 265.5 572.8 273 575 280 C577.2 287 577.2 294.7 578 300 C578.8 305.3 576.7 310 580 312 C583.3 314 595 312 598 312" fill="none" stroke="#b89cc4" stroke-width="0.9" stroke-linejoin="round"/>
<path d="M580 312 C580.7 316.7 582.7 328.7 584 340 C585.3 351.3 587.7 370 588 380 C588.3 390 589 390 586 400 C583 410 575.2 428.3 570 440 C564.8 451.7 559.7 461.7 555 470 C550.3 478.3 544.3 481.7 542 490 C539.7 498.3 540.5 510 541 520 C541.5 530 541.8 540.8 545 550 C548.2 559.2 554.5 566.7 560 575 C565.5 583.3 575.5 589.2 578 600 C580.5 610.8 575.8 628.3 575 640 C574.2 651.7 571.3 662.5 573 670 C574.7 677.5 578.8 682.3 585 685 C591.2 687.7 599.2 686.2 610 686 C620.8 685.8 638.3 685.8 650 684 C661.7 682.2 675.2 678.3 680 675 C684.8 671.7 679.2 665.8 679 664" fill="none" stroke="#b89cc4" stroke-width="0.9" stroke-linejoin="round"/>
<path d="M680 675 C685 675.8 703 675.8 710 680 C717 684.2 718.7 694 722 700 C725.3 706 728.7 713.3 730 716" fill="none" stroke="#b89cc4" stroke-width="0.9" stroke-linejoin="round"/>
<path d="M812 716 C815 715.3 822 713.3 830 712 C838 710.7 848.3 709.5 860 708 C871.7 706.5 886.7 703.5 900 703 C913.3 702.5 927.5 705 940 705 C952.5 705 965.8 705.2 975 703 C984.2 700.8 989.2 696.2 995 692 C1000.8 687.8 1005.5 684.2 1010 678 C1014.5 671.8 1017 660.5 1022 655 C1027 649.5 1033.3 647.8 1040 645 C1046.7 642.2 1056.2 641.3 1062 638 C1067.8 634.7 1072 629.7 1075 625 C1078 620.3 1075.8 614.2 1080 610 C1084.2 605.8 1094.2 604.2 1100 600 C1105.8 595.8 1110.3 590 1115 585 C1119.7 580 1122.5 575 1128 570 C1133.5 565 1143 560 1148 555 C1153 550 1157.7 545.8 1158 540 C1158.3 534.2 1153.8 525.8 1150 520 C1146.2 514.2 1138.3 510 1135 505 C1131.7 500 1129.2 496.7 1130 490 C1130.8 483.3 1136.7 472.5 1140 465 C1143.3 457.5 1145.8 451.7 1150 445 C1154.2 438.3 1160 431.7 1165 425 C1170 418.3 1176.7 410.8 1180 405 C1183.3 399.2 1181.7 394.2 1185 390 C1188.3 385.8 1192.5 383.3 1200 380 C1207.5 376.7 1220.8 373.7 1230 370 C1239.2 366.3 1248.3 362.2 1255 358 C1261.7 353.8 1265 349.7 1270 345 C1275 340.3 1280 335 1285 330 C1290 325 1296.7 320.8 1300 315 C1303.3 309.2 1304.3 302.8 1305 295 C1305.7 287.2 1305.7 273.5 1304 268 C1302.3 262.5 1296.5 263 1295 262" fill="none" stroke="#b89cc4" stroke-width="0.9" stroke-linejoin="round"/>
<path d="M673 153 L700 150" fill="none" stroke="#b89cc4" stroke-width="0.9" stroke-linejoin="round"/>
<path d="M745 153 C754.2 154.2 780.8 158 800 160 C819.2 162 843.3 162.5 860 165 C876.7 167.5 886.7 173.8 900 175 C913.3 176.2 925 173.7 940 172 C955 170.3 978.3 167.3 990 165 C1001.7 162.7 1006.7 159.2 1010 158" fill="none" stroke="#b89cc4" stroke-width="0.9" stroke-linejoin="round"/>
<path d="M1224 470 C1226 464.3 1226 461 1232 456 C1238 451 1250.3 444 1260 440 C1269.7 436 1282.5 432 1290 432 C1297.5 432 1301.3 440.3 1305 440 C1308.7 439.7 1307.8 432 1312 430 C1316.2 428 1323.3 427 1330 428 C1336.7 429 1346.7 431.5 1352 436 C1357.3 440.5 1361 448.5 1362 455 C1363 461.5 1360.8 470.5 1358 475 C1355.2 479.5 1350.5 481.5 1345 482 C1339.5 482.5 1330.2 479.5 1325 478 C1319.8 476.5 1317.3 469.3 1314 473 C1310.7 476.7 1309 492.2 1305 500 C1301 507.8 1295.8 514.7 1290 520 C1284.2 525.3 1275.8 531.2 1270 532 C1264.2 532.8 1260.8 529.5 1255 525 C1249.2 520.5 1240.8 510.8 1235 505 C1229.2 499.2 1221.8 495.8 1220 490 C1218.2 484.2 1222 475.7 1224 470Z" fill="none" stroke="#b89cc4" stroke-width="0.9" stroke-linejoin="round"/>
<path d="M1152 535 C1151.7 528.3 1154.7 522.5 1158 518 C1161.3 513.5 1166.3 510.5 1172 508 C1177.7 505.5 1186.3 502.3 1192 503 C1197.7 503.7 1203 507.5 1206 512 C1209 516.5 1210.2 523.7 1210 530 C1209.8 536.3 1207.5 544.5 1205 550 C1202.5 555.5 1200 560.2 1195 563 C1190 565.8 1180.8 567.8 1175 567 C1169.2 566.2 1163.8 563.3 1160 558 C1156.2 552.7 1152.3 541.7 1152 535Z" fill="none" stroke="#b89cc4" stroke-width="0.9" stroke-linejoin="round"/>
<circle cx="1138" cy="461" r="16" fill="none" stroke="#b89cc4" stroke-width="0.9"/>
<path d="M1238 487 C1238 484.3 1241.7 480.8 1245 478 C1248.3 475.2 1253.5 472.7 1258 470 C1262.5 467.3 1267.5 464.3 1272 462 C1276.5 459.7 1281 457.2 1285 456 C1289 454.8 1294.7 453.8 1296 455 C1297.3 456.2 1292.5 461.2 1293 463 C1293.5 464.8 1297.3 464.2 1299 466 C1300.7 467.8 1303.3 471 1303 474 C1302.7 477 1299.2 480.7 1297 484 C1294.8 487.3 1292.3 490.8 1290 494 C1287.7 497.2 1285.2 501 1283 503 C1280.8 505 1279.2 506.5 1277 506 C1274.8 505.5 1272.5 502 1270 500 C1267.5 498 1264.3 495.5 1262 494 C1259.7 492.5 1257.7 490.7 1256 491 C1254.3 491.3 1253.8 495.5 1252 496 C1250.2 496.5 1247.3 495.5 1245 494 C1242.7 492.5 1238 489.7 1238 487Z" fill="none" stroke="#cfa3cf" stroke-width="0.7" stroke-dasharray="2 1"/>
<path d="M1316 449 C1316.3 447.5 1319.3 447.2 1322 447 C1324.7 446.8 1328.8 447.2 1332 448 C1335.2 448.8 1338.7 450.3 1341 452 C1343.3 453.7 1345.3 455.7 1346 458 C1346.7 460.3 1346.2 465 1345 466 C1343.8 467 1341.5 465.2 1339 464 C1336.5 462.8 1333.2 460.3 1330 459 C1326.8 457.7 1322.3 457.7 1320 456 C1317.7 454.3 1315.7 450.5 1316 449Z" fill="none" stroke="#cfa3cf" stroke-width="0.7" stroke-dasharray="2 1"/>
<path d="M1168 528 C1168.3 526 1170 523.5 1172 522 C1174 520.5 1177.3 519.8 1180 519 C1182.7 518.2 1185.7 516.8 1188 517 C1190.3 517.2 1193.7 518.3 1194 520 C1194.3 521.7 1191.7 525 1190 527 C1188.3 529 1186.2 530.7 1184 532 C1181.8 533.3 1179.3 534.7 1177 535 C1174.7 535.3 1171.5 535.2 1170 534 C1168.5 532.8 1167.7 530 1168 528Z" fill="none" stroke="#cfa3cf" stroke-width="0.7" stroke-dasharray="2 1"/>
<path d="M1178 546 C1178.2 545.2 1181.2 543.8 1183 544 C1184.8 544.2 1188.2 545.8 1189 547 C1189.8 548.2 1189.2 550.7 1188 551 C1186.8 551.3 1183.7 549.8 1182 549 C1180.3 548.2 1177.8 546.8 1178 546Z" fill="none" stroke="#cfa3cf" stroke-width="0.7" stroke-dasharray="2 1"/>
<path d="M1014 181 C1012.5 181.8 1008.2 186.2 1005 186 C1001.8 185.8 998.3 180.5 995 180 C991.7 179.5 989.2 182.8 985 183 C980.8 183.2 975 181.5 970 181 C965 180.5 960 179.7 955 180 C950 180.3 945 181.3 940 183 C935 184.7 930 188.5 925 190 C920 191.5 914.5 192 910 192 C905.5 192 902 189.8 898 190 C894 190.2 890.7 193.7 886 193 C881.3 192.3 873.8 188 870 186 C866.2 184 865.8 182.7 863 181 C860.2 179.3 858.5 177.3 853 176 C847.5 174.7 837.2 173.7 830 173 C822.8 172.3 816.5 172.5 810 172 C803.5 171.5 797.7 171 791 170 C784.3 169 776.8 166.3 770 166 C763.2 165.7 755.8 168.2 750 168 C744.2 167.8 740 165.3 735 165 C730 164.7 725 166.8 720 166 C715 165.2 710 161.3 705 160 C700 158.7 694.2 158.7 690 158 C685.8 157.3 682.8 155.5 680 156 C677.2 156.5 676.7 159.5 673 161 C669.3 162.5 662.3 164.5 658 165 C653.7 165.5 650.8 163 647 164 C643.2 165 638.7 169 635 171 C631.3 173 628.3 174 625 176 C621.7 178 619.2 180.2 615 183 C610.8 185.8 604.2 190.2 600 193 C595.8 195.8 593.7 197.3 590 200 C586.3 202.7 581.2 205.8 578 209 C574.8 212.2 572.2 215.5 571 219 C569.8 222.5 569.3 227.3 571 230 C572.7 232.7 578.2 232.5 581 235 C583.8 237.5 585.8 241.7 588 245 C590.2 248.3 592.7 251.2 594 255 C595.3 258.8 596 263.8 596 268 C596 272.2 593.7 275.8 594 280 C594.3 284.2 597.5 288.3 598 293 C598.5 297.7 597.2 305.5 597 308" fill="none" stroke="#d39ad6" stroke-width="0.8" stroke-dasharray="2.5 1.5"/>
<path d="M680 661 C684 661.3 696.8 661.8 704 663 C711.2 664.2 718.2 665.3 723 668 C727.8 670.7 730.3 675.5 733 679 C735.7 682.5 737.7 685.2 739 689 C740.3 692.8 739.5 697.5 741 702 C742.5 706.5 738.2 713.7 748 716 C757.8 718.3 789.3 717 800 716 C810.7 715 807.3 712.3 812 710 C816.7 707.7 822 704.2 828 702 C834 699.8 840.2 699 848 697 C855.8 695 864.7 691.5 875 690 C885.3 688.5 898.8 688 910 688 C921.2 688 932.5 689.8 942 690 C951.5 690.2 960.8 689.7 967 689 C973.2 688.3 976 688.2 979 686 C982 683.8 982.2 677.5 985 676 C987.8 674.5 992.2 677.7 996 677 C999.8 676.3 1005.3 675.7 1008 672 C1010.7 668.3 1010.5 660.3 1012 655 C1013.5 649.7 1014 643.7 1017 640 C1020 636.3 1024.7 634.5 1030 633 C1035.3 631.5 1044.2 633 1049 631 C1053.8 629 1057 624.5 1059 621 C1061 617.5 1058.3 612.2 1061 610 C1063.7 607.8 1070.2 610 1075 608 C1079.8 606 1086.2 601.8 1090 598 C1093.8 594.2 1095.2 589.2 1098 585 C1100.8 580.8 1103.3 577.2 1107 573 C1110.7 568.8 1115.3 564.2 1120 560 C1124.7 555.8 1131.7 551.7 1135 548 C1138.3 544.3 1140.7 541.7 1140 538 C1139.3 534.3 1134.8 530 1131 526 C1127.2 522 1120.3 517.8 1117 514 C1113.7 510.2 1112 507.3 1111 503 C1110 498.7 1110 492.3 1111 488 C1112 483.7 1115.2 481.3 1117 477 C1118.8 472.7 1120.2 467.3 1122 462 C1123.8 456.7 1124.5 450.8 1128 445 C1131.5 439.2 1138.7 432.3 1143 427 C1147.3 421.7 1150.8 417.2 1154 413 C1157.2 408.8 1162.3 405 1162 402 C1161.7 399 1154.3 397.8 1152 395 C1149.7 392.2 1146.7 388.3 1148 385 C1149.3 381.7 1154.7 377.3 1160 375 C1165.3 372.7 1172.3 373.2 1180 371 C1187.7 368.8 1197.5 364.7 1206 362 C1214.5 359.3 1224.3 357.7 1231 355 C1237.7 352.3 1242.3 349.3 1246 346 C1249.7 342.7 1249.5 339.2 1253 335 C1256.5 330.8 1262 325.7 1267 321 C1272 316.3 1279.2 311.3 1283 307 C1286.8 302.7 1287.8 299.5 1290 295 C1292.2 290.5 1296 284.2 1296 280 C1296 275.8 1292.2 272.7 1290 270 C1287.8 267.3 1284.2 265 1283 264" fill="none" stroke="#d39ad6" stroke-width="0.8" stroke-dasharray="2.5 1.5"/>
<path d="M1283 264 C1281.7 263.2 1276.7 263.1 1275 259 C1273.3 254.9 1273.1 245.2 1272.9 239.3 C1272.7 233.5 1272.9 228.2 1273.7 223.9 C1274.5 219.6 1275.7 216.8 1278 213.6 C1280.3 210.4 1283.9 207 1287.5 205 C1291.1 203 1295.8 203.5 1299.5 201.5 C1303.2 199.5 1305.8 196.1 1309.8 192.9 C1313.8 189.8 1319.6 184.6 1323.6 182.6 C1327.6 180.6 1331.9 180.3 1333.9 180.9 C1335.9 181.5 1335.3 185.2 1335.6 186.1" fill="none" stroke="#d39ad6" stroke-width="0.8" stroke-dasharray="2.5 1.5"/>
<path d="M890 422 C887.6 421.2 880.7 418.3 875.9 417 C871.1 415.7 865.9 415.6 861.2 414 C856.5 412.4 852.3 409.2 847.6 407.5 C842.9 405.8 835.7 406.8 833 404 C830.3 401.2 831.4 395.2 831.4 390.9 C831.4 386.6 832.8 382.3 833.3 378 C833.8 373.7 834.6 369.4 834.6 365 C834.6 360.6 832.8 356.2 833.2 351.9 C833.6 347.6 836.6 343.4 837.1 339.1 C837.6 334.8 835 330.8 836 326 C837 321.2 840.9 315.8 843.2 310.6 C845.5 305.4 850.7 298.7 850 295 C849.3 291.3 842.7 290.7 839.2 288.2 C835.7 285.7 833 282 829.2 280 C825.4 278 820.3 278.2 816.5 276.3 C812.7 274.4 810 270.7 806.4 268.4 C802.8 266.1 798.6 264.7 794.9 262.6 C791.2 260.5 785.8 257.1 784 256" fill="none" stroke="#b9b6b0" stroke-width="1" stroke-linejoin="round"/>
<path d="M836 326 C837.6 324.7 842.9 321.2 845.8 318.3 C848.7 315.4 850.5 311.3 853.4 308.4 C856.3 305.5 860 303.3 863.3 300.8 C866.6 298.3 870.5 296.5 873.4 293.5 C876.3 290.5 877.7 286.1 880.5 283 C883.3 279.9 886.7 277.8 890 275 C893.3 272.2 897.2 269.5 900.1 266.2 C903 262.9 905 258.7 907.5 255 C910 251.3 912.3 247.4 915.2 244.1 C918.1 240.8 921.2 238.1 925 235 C928.8 231.9 933.8 228.9 938 225.6 C942.2 222.3 948 216.8 950 215" fill="none" stroke="#b9b6b0" stroke-width="1" stroke-linejoin="round"/>
<path d="M890 422 C892.1 420.8 898.2 417.1 902.4 414.8 C906.6 412.5 910.9 410.1 915 408 C919.1 405.9 923.2 404.9 926.8 402.4 C930.4 399.9 932.8 395.3 936.4 392.9 C940 390.5 944.8 390 948.7 388 C952.6 386 956.1 383.4 959.7 381 C963.3 378.6 966.4 375.2 970.3 373.3 C974.2 371.4 979.4 371.6 983.3 369.6 C987.2 367.6 989.9 363.5 993.5 361.1 C997.1 358.7 1001.1 356.7 1005 355 C1008.9 353.3 1012.7 352.1 1016.6 350.7 C1020.5 349.3 1024.7 348.7 1028.3 346.8 C1031.9 344.9 1034.8 341.2 1038.4 339.2 C1042 337.2 1046 335.6 1050 335 C1054 334.4 1058.2 336.2 1062.2 335.9 C1066.2 335.6 1070.3 334.1 1074.3 333.4 C1078.3 332.7 1082.4 331.7 1086.4 331.7 C1090.5 331.7 1094.6 333.6 1098.6 333.3 C1102.6 333 1106.5 330.2 1110.6 329.9 C1114.6 329.6 1118.8 331.4 1122.9 331.6 C1127 331.8 1130.9 330.6 1135 331 C1139.1 331.4 1143.3 333.5 1147.6 334.2 C1151.9 334.9 1156.4 334.1 1160.6 335.2 C1164.8 336.3 1168.5 339.9 1172.7 341 C1176.9 342.1 1181.5 341 1185.8 341.5 C1190.1 342 1194.3 343.1 1198.5 344.2 C1202.7 345.3 1206.8 347.2 1211 348 C1215.2 348.8 1221.8 348.8 1224 349" fill="none" stroke="#b9b6b0" stroke-width="1" stroke-linejoin="round"/>
<path d="M890 422 C892.2 422.4 898.9 422.8 903.1 424.2 C907.3 425.6 911.1 428.5 915.2 430.2 C919.3 431.9 923.4 433.5 927.7 434.5 C932 435.5 936.8 435 941 436.4 C945.2 437.8 948.7 441.5 952.9 442.8 C957.1 444.1 962 443.1 966.4 444 C970.8 444.9 975 446.2 979 448 C983 449.8 986.6 452.4 990.1 455 C993.6 457.6 996.5 461.3 1000.3 463.5 C1004.1 465.7 1009.2 465.9 1012.9 468.3 C1016.6 470.7 1019 475 1022.4 477.7 C1025.8 480.4 1029.8 482.4 1033.6 484.7 C1037.3 487 1041.3 488.9 1044.9 491.5 C1048.5 494.1 1050.3 498.7 1055 500 C1059.7 501.3 1067 500.2 1072.8 499.4 C1078.6 498.6 1087.1 495.7 1090 495" fill="none" stroke="#b9b6b0" stroke-width="1" stroke-linejoin="round"/>
<path d="M890 422 C888.8 424.3 884.7 430.8 883 435.6 C881.3 440.4 881.6 446.1 879.8 450.8 C878 455.5 873.3 461.8 872 464" fill="none" stroke="#b9b6b0" stroke-width="1" stroke-linejoin="round"/>
<path d="M890 422 C890.1 424.1 890.3 430.3 890.8 434.4 C891.3 438.5 892.2 442.6 893.1 446.6 C894 450.7 895.6 454.6 895.9 458.7 C896.2 462.8 894.3 467.3 895 471.4 C895.7 475.5 898.9 479.2 899.9 483.2 C900.9 487.2 900.5 491.5 900.9 495.6 C901.3 499.7 901.8 503.7 902.5 507.8 C903.2 511.9 904.4 515.9 905 520 C905.6 524.1 906.8 528.2 906.4 532.3 C906 536.3 903.3 540.2 902.9 544.3 C902.5 548.3 903.8 552.5 903.8 556.6 C903.8 560.7 903.5 564.7 902.8 568.7 C902 572.7 899.8 576.7 899.3 580.7 C898.8 584.8 901.9 590.4 900 593 C898.1 595.6 892.2 595.7 888.2 596.2 C884.2 596.7 879.8 595.7 875.7 596.1 C871.6 596.5 867.6 597.6 863.7 598.7 C859.8 599.9 856.1 602.3 852.1 603 C848.1 603.7 843.7 602.3 839.7 603 C835.7 603.7 831.7 605.1 828 607 C824.3 608.9 821 612 817.3 614.1 C813.6 616.2 809.7 618 805.8 619.8 C801.9 621.6 797.6 622.6 793.9 624.8 C790.2 627 787.6 631.2 783.8 633.1 C780 635 775 634.8 771 636.4 C767 638 761.8 641.9 760 643" fill="none" stroke="#b9b6b0" stroke-width="1" stroke-linejoin="round"/>
<path d="M890 422 C891.1 424.7 894.8 432.6 896.5 438.1 C898.2 443.6 897.8 450.7 900 455 C902.2 459.3 906.3 461.3 910 463.7 C913.7 466.1 918.5 467.2 922.2 469.6 C925.9 472 929 475.1 932.3 478.1 C935.6 481.1 938.2 484.9 941.8 487.5 C945.4 490.1 950.4 490.9 953.8 493.7 C957.2 496.5 959.1 501.2 962.4 504.2 C965.7 507.2 969.7 509.2 973.4 511.6 C977.1 514.1 980.9 516.3 984.5 518.9 C988.1 521.5 991.5 524.5 995 527 C998.5 529.5 1001.6 532.5 1005.4 533.9 C1009.2 535.3 1014 534.4 1017.9 535.6 C1021.8 536.9 1025 539.6 1028.7 541.4 C1032.4 543.1 1036 544.9 1039.9 546.1 C1043.8 547.3 1048.5 546.9 1052.2 548.5 C1055.9 550.1 1058.6 554.2 1062.3 556 C1066 557.8 1070.4 557.7 1074.2 559.2 C1078 560.7 1083.2 564 1085 565" fill="none" stroke="#b9b6b0" stroke-width="1" stroke-linejoin="round"/>
<path d="M773 341 C775.1 340.5 781.3 338.8 785.5 337.8 C789.7 336.8 793.9 335.7 798.2 335.1 C802.5 334.5 807.1 335.4 811.3 334.3 C815.5 333.2 819.2 329.8 823.3 328.4 C827.4 327 833.9 326.4 836 326" fill="none" stroke="#b9b6b0" stroke-width="1" stroke-linejoin="round"/>
<path d="M778 381 C780.2 382.1 786.6 386.2 791.3 387.8 C796 389.4 801.6 389 806.3 390.6 C811 392.2 815 395.5 819.5 397.7 C824 399.9 830.8 402.9 833 404" fill="none" stroke="#b9b6b0" stroke-width="1" stroke-linejoin="round"/>
<path d="M890 422 C888.1 422.7 882.6 425.1 878.8 426.4 C875 427.7 870.8 428.2 867.2 430 C863.6 431.8 861 435.6 857.3 437.2 C853.6 438.8 848.9 438.2 845.2 439.7 C841.5 441.2 838.5 444.2 835 446.3 C831.5 448.4 828.2 450.7 824.5 452.2 C820.8 453.7 816.3 453.5 812.7 455.3 C809.1 457.1 806.5 461.2 802.9 463 C799.3 464.8 794.9 464.8 791.1 466.1 C787.3 467.4 783.6 468.8 780 470.6 C776.4 472.4 773.4 475.5 769.6 476.8 C765.8 478.1 761 477.2 757.2 478.6 C753.4 480 750.6 483.4 747 485.2 C743.4 487 739.5 488 735.8 489.6 C732.1 491.2 726.6 491.5 725 495 C723.4 498.5 725.1 505.4 726.4 510.4 C727.7 515.4 731.5 519.8 732.9 524.7 C734.3 529.6 737.2 538 735 540 C732.8 542 724.8 537.6 719.6 536.8 C714.4 536 706.6 535.3 704 535" fill="none" stroke="#b9b6b0" stroke-width="1" stroke-linejoin="round"/>
<path d="M1050 335 C1050 337.2 1050.9 344 1050.3 348.4 C1049.7 352.8 1047 356.9 1046.2 361.3 C1045.4 365.7 1045.5 370.1 1045.2 374.5 C1044.9 378.9 1045.3 383.5 1044.3 387.8 C1043.3 392.1 1040.1 396.1 1039.3 400.5 C1038.5 404.9 1040 409.6 1039.6 414 C1039.2 418.4 1036.3 423.1 1037 427 C1037.7 430.9 1041.6 433.9 1043.9 437.3 C1046.2 440.7 1047.9 444.5 1050.6 447.6 C1053.3 450.7 1057.8 452.5 1060.3 455.7 C1062.8 458.9 1063.4 463.6 1065.9 466.9 C1068.4 470.2 1072.4 472.4 1075.3 475.3 C1078.2 478.2 1081 481.2 1083.5 484.5 C1086 487.8 1088.9 493.2 1090 495" fill="none" stroke="#b9b6b0" stroke-width="1" stroke-linejoin="round"/>
<path d="M828 607 C828.4 609.2 829 616 830.2 620.3 C831.4 624.6 834.3 628.5 835.3 632.9 C836.2 637.3 834.8 642.3 835.9 646.6 C837 650.9 840.4 654.7 841.9 658.9 C843.4 663.1 843.6 666.8 845 672 C846.4 677.2 849.2 687 850 690" fill="none" stroke="#b9b6b0" stroke-width="1" stroke-linejoin="round"/>
<path d="M845 672 C847 671.4 853.3 669.9 857.2 668.3 C861.1 666.7 864.6 663.9 868.5 662.2 C872.4 660.5 876.4 659.1 880.5 657.9 C884.6 656.7 890.9 655.5 893 655" fill="none" stroke="#b9b6b0" stroke-width="1" stroke-linejoin="round"/>
<path d="M773 341 C771.1 340 765.2 337.6 761.7 335.2 C758.2 332.8 755.5 328.8 751.8 326.8 C748 324.9 743.1 325.2 739.2 323.5 C735.3 321.8 732.2 318.6 728.6 316.4 C725 314.2 721.4 312.1 717.4 310.5 C713.4 308.9 708.6 308.9 704.9 306.9 C701.2 304.9 698.7 300.7 695 298.6 C691.3 296.5 686.8 296.1 682.9 294.3 C679 292.5 675.3 290.4 671.8 288 C668.3 285.6 665.4 282 661.8 279.8 C658.2 277.6 653.7 277.5 650 275 C646.3 272.5 642.7 268.7 639.7 264.9 C636.7 261.1 635.1 256.2 632.2 252.4 C629.3 248.6 625.8 245.3 622.4 241.9 C619 238.5 613.7 233.7 612 232" fill="none" stroke="#b9b6b0" stroke-width="1" stroke-linejoin="round"/>
<path d="M784 256 C781.7 256.5 775 258.5 770.4 259.1 C765.8 259.7 761.1 259.4 756.5 259.4 C751.9 259.4 747.2 258.7 742.6 259.2 C738 259.7 733.6 262.1 729 262.6 C724.4 263.1 718.8 263.6 715 262 C711.2 260.4 709.3 255.5 706 252.7 C702.7 249.9 698.9 247.7 695.4 245.2 C691.9 242.7 688.1 240.4 685 237.5 C681.9 234.6 679.9 230.1 676.5 227.5 C673.1 224.9 668 224.3 664.4 221.9 C660.8 219.5 656.6 214.5 655 213" fill="none" stroke="#b9b6b0" stroke-width="1" stroke-linejoin="round"/>
<path d="M995 527 C995.9 529 997.8 535.3 1000.3 538.7 C1002.8 542.1 1007.3 544.1 1009.8 547.5 C1012.3 550.9 1013 555.5 1015.2 559.1 C1017.5 562.7 1020.5 565.7 1023.3 568.9 C1026.1 572.1 1029.8 574.7 1032.1 578.2 C1034.4 581.7 1035 586.4 1037.2 590 C1039.4 593.6 1043.5 596 1045 600 C1046.5 604 1046.7 609.4 1046.5 614.1 C1046.3 618.8 1044.4 625.7 1044 628" fill="none" stroke="#b9b6b0" stroke-width="1" stroke-linejoin="round"/>
<path d="M959 320 C956.7 320.6 950 323.1 945.4 323.3 C940.8 323.5 935.9 321 931.3 321.1 C926.7 321.2 922.3 323.5 917.7 324 C913.1 324.5 908.4 323.7 903.8 323.9 C899.2 324.1 892.3 324.8 890 325" fill="none" stroke="#bfe0bf" stroke-width="1" stroke-linejoin="round"/>
<path d="M959 320 C959.5 317.9 961.1 311.8 962 307.6 C962.9 303.4 963.1 299.1 964.2 295 C965.3 290.9 967.8 287 968.4 282.8 C969 278.6 967.1 273.8 967.7 269.6 C968.3 265.4 971 261.6 972.2 257.5 C973.4 253.4 974.5 247.1 975 245" fill="none" stroke="#bfe0bf" stroke-width="1" stroke-linejoin="round"/>
<path d="M959 320 C960.9 321.6 966.1 326.6 970.1 329.3 C974.1 332 979.1 333.2 983 336.1 C986.9 339 989.5 343.5 993.2 346.6 C996.9 349.8 1003 353.6 1005 355" fill="none" stroke="#bfe0bf" stroke-width="1" stroke-linejoin="round"/>
<path d="M979 448 C977 448.2 970.8 448.8 966.7 449.1 C962.6 449.5 958.3 449.1 954.3 450.1 C950.3 451.1 946.5 454.2 942.5 455 C938.5 455.8 932.1 455 930 455" fill="none" stroke="#bfe0bf" stroke-width="1" stroke-linejoin="round"/>
<path d="M979 448 C980.8 446.9 986 443 989.9 441.7 C993.8 440.4 998.4 441.3 1002.4 440.3 C1006.4 439.3 1010.2 437.5 1014 435.9 C1017.8 434.3 1021.5 432.3 1025.3 430.8 C1029.1 429.3 1035 427.6 1037 427" fill="none" stroke="#bfe0bf" stroke-width="1" stroke-linejoin="round"/>
<path d="M979 448 C978 450.3 974.6 456.9 973.2 461.6 C971.9 466.3 972.3 471.7 970.9 476.4 C969.5 481.1 966 487.7 965 490" fill="none" stroke="#bfe0bf" stroke-width="1" stroke-linejoin="round"/>
<path d="M833 404 C830.8 402.9 824.2 399.4 819.6 397.5 C815 395.6 810 394.7 805.4 392.9 C800.8 391.1 796.3 388.9 791.7 386.9 C787.1 384.9 780.3 382 778 381" fill="none" stroke="#bfe0bf" stroke-width="1" stroke-linejoin="round"/>
<path d="M773 341 C775.3 340.6 782.2 338.7 786.9 338.3 C791.6 337.9 796.5 338.9 801.2 338.4 C805.9 337.8 812.7 335.6 815 335" fill="none" stroke="#bfe0bf" stroke-width="1" stroke-linejoin="round"/>
<path d="M704 535 C705 532.7 707.5 525.5 709.9 521.1 C712.2 516.7 715.6 512.8 718.1 508.4 C720.6 504 723.9 497.2 725 495" fill="none" stroke="#bfe0bf" stroke-width="1" stroke-linejoin="round"/>
<path d="M828 607 C829.2 605.4 833.7 601 835.5 597.4 C837.3 593.8 836.9 589 838.7 585.4 C840.6 581.8 844.4 579.4 846.6 576 C848.8 572.6 850.4 568.9 852.1 565.3 C853.9 561.7 855 557.7 857.1 554.3 C859.2 550.9 863.7 546.5 865 545" fill="none" stroke="#bfe0bf" stroke-width="1" stroke-linejoin="round"/>
<path d="M1085 291 C1086.6 292.4 1091.5 296.6 1094.7 299.4 C1097.9 302.2 1100.8 305.4 1104.3 307.9 C1107.8 310.4 1112.2 311.7 1115.4 314.5 C1118.6 317.3 1120.2 322.1 1123.5 324.9 C1126.8 327.6 1133.1 330 1135 331" fill="none" stroke="#bfe0bf" stroke-width="1" stroke-linejoin="round"/>
<path d="M1085 291 C1083.2 289.8 1077.5 286.8 1074.5 284 C1071.5 281.2 1069.8 276.8 1066.7 274 C1063.6 271.2 1059.4 269.7 1056 267.2 C1052.6 264.7 1049.3 262.2 1046.4 259.2 C1043.5 256.2 1041.8 251.8 1038.7 249.1 C1035.6 246.3 1030.8 245.5 1027.7 242.7 C1024.6 239.9 1023 235.4 1020 232.5 C1017 229.6 1011.7 226.2 1010 225" fill="none" stroke="#bfe0bf" stroke-width="1" stroke-linejoin="round"/>
<path d="M655 213 C654.8 215.1 654 221.3 653.7 225.4 C653.4 229.5 654.1 233.7 653.4 237.8 C652.7 241.9 649.9 245.9 649.5 250 C649.1 254.1 651.2 258.4 651.3 262.6 C651.4 266.8 650.2 272.9 650 275" fill="none" stroke="#bfe0bf" stroke-width="1" stroke-linejoin="round"/>
<path d="M655 213 C657.1 212.8 663.5 212.7 667.5 211.6 C671.5 210.5 675.2 207.5 679.2 206.3 C683.2 205.1 687.4 204.8 691.6 204.3 C695.8 203.8 700.1 204.2 704.2 203.2 C708.3 202.2 711.9 199 716 198.3 C720.1 197.6 724.7 199.3 728.9 198.9 C733.1 198.5 737 196.8 741 195.7 C745 194.6 749 193 753.2 192.5 C757.4 192 761.9 193.4 766 192.5 C770.1 191.6 773.6 188.2 777.6 186.9 C781.6 185.7 787.9 185.3 790 185" fill="none" stroke="#bfe0bf" stroke-width="1" stroke-linejoin="round"/>
<path d="M1037 427 C1038.9 427.7 1044.8 429.4 1048.4 431.2 C1052.1 433 1055.1 436.3 1058.9 437.7 C1062.7 439.1 1067.4 438.1 1071.2 439.5 C1075 440.9 1078.1 444.2 1081.8 445.8 C1085.5 447.4 1089.5 448.1 1093.4 449.3 C1097.3 450.5 1103.1 452.4 1105 453" fill="none" stroke="#bfe0bf" stroke-width="1" stroke-linejoin="round"/>
<path d="M880 620 C877.8 619.8 870.9 619.6 866.5 618.6 C862.1 617.6 858.2 615.2 853.9 613.9 C849.6 612.5 845.2 611.6 840.9 610.5 C836.6 609.4 830.1 607.6 828 607" fill="none" stroke="#bfe0bf" stroke-width="1" stroke-linejoin="round"/>
<path d="M900 593 C901.9 592 908 589.5 911.5 587 C915 584.5 917.1 580.2 920.7 577.8 C924.3 575.4 929.3 575.1 932.9 572.8 C936.5 570.5 939.1 566.8 942.4 563.9 C945.6 561 948.8 558 952.4 555.7 C956 553.4 960.5 552.5 963.9 549.9 C967.3 547.2 969.2 542.4 972.6 539.8 C976 537.1 980.5 536.1 984.2 534 C987.9 531.9 993.2 528.2 995 527" fill="none" stroke="#bfe0bf" stroke-width="1" stroke-linejoin="round"/>
<path d="M872 464 C870 464.4 863.8 465.3 859.7 466.3 C855.7 467.3 851.7 468.8 847.7 470 C843.7 471.2 839.9 473.1 835.7 473.7 C831.6 474.2 826.9 472.6 822.8 473.3 C818.7 474 815.1 477.1 811 478 C806.9 478.9 802.6 478.4 798.4 478.8 C794.2 479.2 789.9 479.2 785.9 480.3 C781.9 481.4 778.2 484.5 774.1 485.3 C770 486.1 765.4 484.5 761.3 485.3 C757.2 486.1 753.5 488.6 749.5 490 C745.5 491.4 741.6 492.6 737.5 493.4 C733.4 494.2 727.1 494.7 725 495" fill="none" stroke="#bfe0bf" stroke-width="1" stroke-linejoin="round"/>
<path d="M890 275 C889.3 272.9 886.8 266.8 886 262.4 C885.2 258 886.6 253.2 885.5 248.9 C884.4 244.7 881.1 241 879.6 236.9 C878.1 232.8 877.4 228.4 876.4 224.1 C875.4 219.8 875.4 215.3 873.9 211.2 C872.4 207.1 868.6 203.5 867.3 199.3 C866 195.1 866.2 188.2 866 186" fill="none" stroke="#bfe0bf" stroke-width="1" stroke-linejoin="round"/>
<path d="M850 295 C850.1 292.9 850.1 286.8 850.4 282.7 C850.7 278.6 851.1 274.6 852 270.6 C852.9 266.6 855.4 262.9 856 258.8 C856.6 254.8 854.8 250.3 855.4 246.3 C856 242.3 858.8 238.6 859.9 234.6 C861 230.6 861.3 226.6 861.7 222.5 C862.1 218.4 861.3 214.2 862.1 210.2 C862.9 206.2 866 202.5 866.6 198.5 C867.2 194.5 866.1 188.1 866 186" fill="none" stroke="#bfe0bf" stroke-width="1" stroke-linejoin="round"/>
<path d="M1135 331 C1137 331 1143.4 331.7 1147.3 330.8 C1151.2 329.9 1154.7 326.6 1158.6 325.5 C1162.5 324.4 1166.7 324.9 1170.7 324.3 C1174.7 323.7 1178.7 323 1182.5 321.7 C1186.3 320.4 1189.8 317.4 1193.7 316.5 C1197.6 315.6 1202 317.2 1206 316.4 C1210 315.6 1213.5 312.9 1217.4 311.7 C1221.3 310.5 1225.3 309.8 1229.3 309.4 C1233.3 309 1237.7 310 1241.6 309.1 C1245.5 308.2 1249 305.2 1252.9 304.2 C1256.8 303.2 1263 303.2 1265 303" fill="none" stroke="#bfe0bf" stroke-width="1" stroke-linejoin="round"/>
<path d="M890 422 C890.2 419.3 891.5 411.2 891.3 405.8 C891.1 400.4 889 395.1 888.9 389.7 C888.8 384.3 890.7 378.9 890.7 373.5 C890.8 368.1 889.6 362.7 889.2 357.3 C888.9 351.9 888.5 346.6 888.6 341.2 C888.7 335.8 889.7 330.5 890 325 C890.3 319.5 890.8 313.9 890.6 308.3 C890.4 302.8 888.7 297.2 888.6 291.7 C888.5 286.1 887.8 279.9 890 275 C892.2 270.1 898.1 266.3 902.1 262 C906.1 257.7 910.3 253.5 914.1 249 C917.9 244.5 921.1 239.1 925 235 C928.9 230.9 933 228 937.2 224.7 C941.4 221.4 945.2 217.6 950 215 C954.8 212.4 960.9 211.7 965.9 209.2 C970.9 206.7 975.1 202.7 979.9 199.9 C984.7 197.1 989.9 194.8 994.9 192.3 C999.9 189.8 1007.5 186.2 1010 185" fill="none" stroke="#9db3da" stroke-width="1.3" stroke-linejoin="round"/>
<path d="M890 422 C892.1 420.9 898.5 417.6 902.7 415.3 C906.9 413 910.4 411 915 408 C919.6 405 925.1 400.8 930.1 397.1 C935.1 393.4 939.7 389.3 944.7 385.6 C949.7 381.9 954.8 377.6 960 375 C965.2 372.4 970.8 372.4 975.8 370.1 C980.8 367.9 985 364 989.9 361.5 C994.8 359 999.9 357.1 1005 355 C1010.1 352.9 1015.2 351.1 1020.3 349 C1025.4 346.9 1030.5 344.9 1035.4 342.6 C1040.4 340.3 1045.2 336.6 1050 335 C1054.8 333.4 1059.4 333 1064.1 332.9 C1068.8 332.8 1073.7 334.4 1078.4 334.2 C1083.1 334 1087.8 332.4 1092.5 331.9 C1097.2 331.4 1101.9 331 1106.6 331.1 C1111.3 331.2 1116.2 332.4 1120.9 332.4 C1125.6 332.4 1130.5 329.2 1135 331 C1139.5 332.8 1144.2 338.6 1148.2 342.9 C1152.2 347.2 1155 352.6 1159 357 C1163 361.4 1169.8 367 1172 369" fill="none" stroke="#9db3da" stroke-width="1.3" stroke-linejoin="round"/>
<path d="M890 422 C892.3 423.7 899.5 428.6 903.8 432.4 C908.1 436.2 911.5 441.1 915.9 444.9 C920.3 448.7 925.6 451.5 930 455 C934.4 458.5 938.5 462.1 942.5 465.9 C946.5 469.7 950.2 473.7 954 477.7 C957.8 481.7 960.7 487.6 965 490 C969.3 492.4 975 491.6 980 491.9 C985 492.2 990.2 491 995.2 491.6 C1000.2 492.2 1004.9 494.8 1009.9 495.7 C1014.9 496.6 1020 496.6 1025 497 C1030 497.4 1035 497.6 1040 498.1 C1045 498.6 1049.5 499.8 1055 500 C1060.5 500.2 1067 500.3 1072.8 499.5 C1078.6 498.7 1087.1 495.8 1090 495" fill="none" stroke="#9db3da" stroke-width="1.3" stroke-linejoin="round"/>
<path d="M890 422 C890.9 424.7 893.9 432.8 895.6 438.3 C897.3 443.8 899 449.5 900 455 C901 460.5 901.5 465.8 901.6 471.2 C901.7 476.6 900.4 482.2 900.8 487.6 C901.2 493 903.5 498.3 904.2 503.7 C904.9 509.1 905.7 514.7 905 520 C904.3 525.3 901.2 530.1 899.8 535.3 C898.3 540.5 897.3 545.7 896.3 551 C895.3 556.3 895.4 561.9 894 567.1 C892.6 572.3 889.7 577.1 888.2 582.2 C886.7 587.4 887.9 594.8 885 598 C882.1 601.2 875.7 600.8 871 601.7 C866.3 602.6 861.4 603 856.6 603.4 C851.8 603.8 847 603.8 842.2 604.4 C837.4 605 832.5 605.1 828 607 C823.5 608.9 819.7 613.3 815.1 615.5 C810.5 617.7 805 618.3 800.3 620.4 C795.6 622.5 791.5 625.6 787 628.2 C782.5 630.8 778.1 633.3 773.6 635.8 C769.1 638.3 763 639.1 760 643 C757 646.9 756.2 653.5 755.4 659 C754.6 664.5 755.9 670.3 755.3 675.8 C754.7 681.3 753.7 687.3 752 692 C750.3 696.7 746.2 702 745 704" fill="none" stroke="#9db3da" stroke-width="1.3" stroke-linejoin="round"/>
<path d="M890 422 C888.8 424.2 884.5 430.6 882.7 435.4 C880.9 440.1 881 445.7 879.2 450.5 C877.4 455.3 873.2 461.8 872 464" fill="none" stroke="#9db3da" stroke-width="1.3" stroke-linejoin="round"/>
<path d="M890 422 C887.6 422.6 880.4 424.5 875.5 425.4 C870.6 426.3 865.5 426.2 860.7 427.4 C855.9 428.6 851.5 431.5 846.6 432.5 C841.8 433.5 836.5 432.6 831.6 433.5 C826.7 434.4 822.1 436.7 817.4 438.1 C812.6 439.6 808 441.2 803.1 442.2 C798.2 443.2 793.1 442.8 788.3 444.1 C783.5 445.4 779.2 448.7 774.4 450 C769.6 451.3 764.5 451.3 759.6 452.1 C754.7 452.9 748.5 452.3 745 455 C741.5 457.7 740.5 463.8 738.5 468.4 C736.5 473 735.4 478 733.1 482.4 C730.9 486.8 726 490.4 725 495 C724 499.6 726.1 505.2 727.2 510.2 C728.4 515.2 730.6 520 731.9 525 C733.2 530 737 538 735 540 C733 542 724.8 538 719.6 537.2 C714.4 536.4 706.6 535.4 704 535" fill="none" stroke="#9db3da" stroke-width="1.3" stroke-linejoin="round"/>
<path d="M890 422 C887.6 421.4 880.1 420.2 875.4 418.7 C870.7 417.1 866.3 414.3 861.6 412.7 C856.9 411.1 851.9 410.4 847.1 409 C842.3 407.6 835.4 404.8 833 404" fill="none" stroke="#9db3da" stroke-width="1.3" stroke-linejoin="round"/>
<path d="M890 422 C888.5 420.1 884.3 414.2 881.1 410.7 C877.9 407.1 873.8 404.5 870.8 400.7 C867.8 396.9 866.3 391.8 863.3 388.1 C860.3 384.4 855.9 381.8 852.6 378.4 C849.3 375 846.3 371.2 843.3 367.5 C840.3 363.8 838 359.4 834.6 356 C831.2 352.6 826.5 350.4 823.2 346.9 C819.9 343.4 818.3 338.9 815 335 C811.7 331.1 807.4 327 803.4 323.2 C799.4 319.4 795.1 316.1 791.2 312.2 C787.3 308.3 784.2 303.1 780 300 C775.8 296.9 770.5 296.4 766.2 293.7 C762 291 758.8 286.6 754.5 284 C750.2 281.4 745 280.4 740.6 277.9 C736.2 275.4 732.6 271.6 728.3 269 C724 266.4 719.1 265 715 262 C710.9 259 707.9 254.3 703.9 251.1 C699.9 247.9 694.7 246.1 690.7 242.8 C686.7 239.5 684 234.7 680 231.4 C676 228.1 671 226.1 666.8 223 C662.6 219.9 659.4 216 655 213 C650.6 210 644.9 208.1 640.2 205.1 C635.5 202.1 631.3 198.2 626.6 195.2 C621.9 192.2 614.4 188.4 612 187" fill="none" stroke="#9db3da" stroke-width="1.3" stroke-linejoin="round"/>
<path d="M1010 185 C1007.3 185.1 999.1 184.8 993.7 185.4 C988.3 186 983 187.6 977.6 188.4 C972.2 189.2 966.8 189.8 961.4 190.1 C956 190.4 950.4 190.2 945 190 C939.6 189.8 934.5 188.7 929.2 188.7 C923.9 188.7 918.6 190.2 913.3 189.9 C908 189.6 902.9 187.8 897.6 187.1 C892.4 186.4 887.1 186.2 881.8 186 C876.5 185.8 871.4 186.5 866 186 C860.6 185.5 854.8 184.4 849.4 182.9 C844 181.4 838.9 178.3 833.4 177.1 C827.9 175.9 822.1 176.5 816.5 175.7 C810.9 174.8 804.4 170.4 800 172 C795.6 173.6 791.7 182.8 790 185" fill="none" stroke="#9db3da" stroke-width="1.3" stroke-linejoin="round"/>
<path d="M790 185 C789.9 187.4 790 194.5 789.3 199.2 C788.6 203.9 786.2 208.5 785.7 213.2 C785.2 217.9 786.8 222.8 786.6 227.6 C786.4 232.3 784.8 237 784.4 241.7 C784 246.4 784.5 251.2 784 256 C783.5 260.8 781.9 265.7 781.7 270.6 C781.5 275.5 782.9 280.6 782.6 285.5 C782.3 290.4 781.1 294.2 780 300 C778.9 305.8 777.1 313.6 775.9 320.4 C774.7 327.2 772.9 334.2 773 341 C773.1 347.8 775.8 354.2 776.6 360.9 C777.4 367.6 778.7 375.1 778 381 C777.3 386.9 774.8 391.4 772.5 396.3 C770.2 401.2 766.4 405.4 764.2 410.3 C762 415.2 761.6 421 759.4 425.9 C757.1 430.8 753.1 434.9 750.7 439.8 C748.3 444.7 746 452.5 745 455" fill="none" stroke="#9db3da" stroke-width="1.3" stroke-linejoin="round"/>
<path d="M735 540 C735.8 542.4 738.4 549.5 739.7 554.4 C741 559.3 741.9 564.2 742.9 569.2 C743.9 574.2 744.1 579.3 745.5 584.2 C746.9 589.1 750 593.5 751.1 598.4 C752.2 603.3 751.3 608.7 752.2 613.7 C753.1 618.7 755 623.4 756.3 628.3 C757.6 633.2 761.7 639.8 760 643 C758.3 646.2 751 646.3 746.3 647.4 C741.6 648.5 736.5 648.1 731.9 649.6 C727.3 651.1 723.4 654.4 718.9 656.1 C714.4 657.8 711.8 660 705 660 C698.2 660 682.5 656.7 678 656" fill="none" stroke="#9db3da" stroke-width="1.3" stroke-linejoin="round"/>
<path d="M890 275 C887.7 275.9 880.4 278 876 280.3 C871.6 282.6 867.9 286.4 863.6 288.8 C859.3 291.2 853.6 291.5 850 295 C846.4 298.5 844 304.7 841.7 309.9 C839.4 315.1 840.5 321.8 836 326 C831.5 330.2 820.1 331.6 815 335 C809.9 338.4 808.2 342.2 805.2 346.1 C802.2 350 800.3 354.7 797.2 358.5 C794.1 362.3 789.7 365.1 786.5 368.9 C783.3 372.6 779.4 379 778 381" fill="none" stroke="#9db3da" stroke-width="1.3" stroke-linejoin="round"/>
<path d="M784 256 C786.2 257.3 792.9 261.1 797.3 263.7 C801.7 266.3 806 269 810.5 271.4 C815 273.8 820.2 275.1 824.5 277.8 C828.8 280.5 832.1 284.9 836.4 287.8 C840.6 290.7 847.7 293.8 850 295" fill="none" stroke="#9db3da" stroke-width="1.3" stroke-linejoin="round"/>
<path d="M784 256 C786.5 256.4 794.3 256.9 799.3 258.1 C804.3 259.3 809 262.1 814 263.2 C819 264.3 824.3 263.9 829.4 264.5 C834.5 265.1 839.6 265.6 844.6 266.6 C849.6 267.6 854.4 270 859.5 270.7 C864.6 271.4 870 270 875.1 270.7 C880.2 271.4 887.5 274.3 890 275" fill="none" stroke="#9db3da" stroke-width="1.3" stroke-linejoin="round"/>
<path d="M945 190 C944 192.5 940.9 200.1 938.9 205.2 C936.9 210.3 935.5 215.7 933.2 220.7 C930.9 225.7 923.6 231.9 925 235 C926.4 238.1 935.9 238.1 941.5 239 C947.1 239.9 953 239.5 958.6 240.5 C964.2 241.5 970.4 242.5 975 245 C979.6 247.5 982.6 251.8 986.4 255.3 C990.1 258.8 993.6 262.6 997.5 265.9 C1001.4 269.2 1006.5 271.5 1010 275 C1013.5 278.5 1016 282.5 1018.4 286.7 C1020.8 290.9 1021.9 295.9 1024.5 300 C1027.1 304.1 1030.9 307.2 1033.9 311 C1036.9 314.8 1039.7 318.7 1042.4 322.7 C1045.1 326.7 1048.7 332.9 1050 335" fill="none" stroke="#9db3da" stroke-width="1.3" stroke-linejoin="round"/>
<path d="M1010 225 C1009.7 227.8 1008.1 236.1 1008.1 241.7 C1008.1 247.2 1009.7 252.8 1010 258.3 C1010.3 263.9 1010 272.2 1010 275" fill="none" stroke="#9db3da" stroke-width="1.3" stroke-linejoin="round"/>
<path d="M1010 185 C1010.2 188.3 1011.2 198.3 1011.2 205 C1011.2 211.7 1013.1 220.1 1010 225 C1006.9 229.9 998.1 231.3 992.3 234.6 C986.5 237.9 977.9 243.3 975 245" fill="none" stroke="#9db3da" stroke-width="1.3" stroke-linejoin="round"/>
<path d="M1050 335 C1051.4 333.1 1055.5 327.4 1058.5 323.8 C1061.5 320.2 1065.2 317.1 1068.3 313.6 C1071.4 310.1 1074.2 306.4 1077 302.6 C1079.8 298.8 1083.7 292.9 1085 291" fill="none" stroke="#9db3da" stroke-width="1.3" stroke-linejoin="round"/>
<path d="M1050 335 C1049.6 337.6 1048.1 345.2 1047.7 350.3 C1047.3 355.4 1048.3 360.8 1047.5 365.9 C1046.7 371 1043.8 375.8 1042.8 380.9 C1041.8 386 1042 391.2 1041.4 396.3 C1040.8 401.4 1040 406.6 1039.3 411.7 C1038.6 416.8 1035.7 422.4 1037 427 C1038.3 431.6 1043.4 435.5 1047.3 439 C1051.2 442.5 1056.5 444.5 1060.5 447.9 C1064.5 451.3 1067.5 455.9 1071.2 459.5 C1075 463.1 1079 466.4 1083 469.8 C1087 473.2 1093 478.3 1095 480" fill="none" stroke="#9db3da" stroke-width="1.3" stroke-linejoin="round"/>
<path d="M1265 303 C1263.1 304.8 1257.1 309.7 1253.6 313.5 C1250.1 317.3 1247.1 321.5 1244 325.6 C1240.9 329.7 1238.1 334.1 1234.8 338 C1231.5 341.9 1228.8 346.2 1224 349 C1219.2 351.8 1212 352.2 1206.3 354.7 C1200.6 357.1 1195.6 361.3 1189.9 363.7 C1184.2 366.1 1176.5 366.1 1172 369 C1167.5 371.9 1166.1 377.4 1162.9 381.4 C1159.7 385.4 1155.8 388.9 1152.8 393 C1149.8 397.1 1147.9 402.1 1144.6 406 C1141.3 409.9 1136.3 412.5 1132.9 416.3 C1129.5 420.1 1127.2 424.8 1124.1 428.9 C1121 433 1117.7 436.9 1114.5 440.9 C1111.3 444.9 1107.7 448.9 1105 453 C1102.3 457.1 1099.9 461.3 1098.2 465.8 C1096.5 470.3 1096.4 475.1 1095 480 C1093.6 484.9 1090.9 490.2 1090 495 C1089.1 499.8 1090 504.4 1089.6 509 C1089.1 513.6 1087.8 518.2 1087.3 522.9 C1086.8 527.6 1086.8 532.3 1086.9 537 C1087 541.7 1088 546.4 1087.7 551.1 C1087.4 555.8 1087.7 560.8 1085 565 C1082.3 569.2 1075.7 572.2 1071.4 576.3 C1067.1 580.4 1063.6 585.4 1059.2 589.4 C1054.8 593.4 1049.2 596.8 1045 600 C1040.8 603.2 1037.7 606.1 1033.7 608.8 C1029.7 611.4 1025 613.2 1021.1 615.9 C1017.1 618.6 1013.4 621.5 1010 625 C1006.6 628.5 1004.1 633.3 1000.6 636.9 C997.1 640.5 992.3 643.2 988.8 646.8 C985.3 650.4 982.6 654.7 979.5 658.7 C976.4 662.7 973.5 666.9 970.2 670.8 C967 674.7 961.7 680.1 960 682" fill="none" stroke="#9db3da" stroke-width="1.3" stroke-linejoin="round"/>
<path d="M1283 264 C1282.3 266.3 1280.8 273.5 1278.7 277.8 C1276.6 282.1 1272.7 285.5 1270.4 289.7 C1268.1 293.9 1265.9 300.8 1265 303" fill="none" stroke="#9db3da" stroke-width="1.3" stroke-linejoin="round"/>
<path d="M1085 565 C1083.6 567.1 1079.2 573.2 1076.5 577.4 C1073.8 581.6 1071.5 586.2 1068.7 590.3 C1065.9 594.4 1061.9 597.9 1059.4 602.2 C1056.9 606.5 1056.1 612 1053.5 616.3 C1050.9 620.6 1045.6 626 1044 628" fill="none" stroke="#9db3da" stroke-width="1.3" stroke-linejoin="round"/>
<path d="M1045 600 C1044.8 602.3 1044.1 609.3 1043.9 614 C1043.7 618.7 1044 625.7 1044 628" fill="none" stroke="#9db3da" stroke-width="1.3" stroke-linejoin="round"/>
<path d="M995 527 C996.5 529.2 1001.1 535.7 1004.2 540 C1007.3 544.3 1010.1 548.8 1013.4 553 C1016.7 557.2 1020.3 560.2 1024 565 C1027.7 569.8 1032.2 576 1035.7 581.8 C1039.2 587.6 1043.5 597 1045 600" fill="none" stroke="#9db3da" stroke-width="1.3" stroke-linejoin="round"/>
<path d="M965 490 C966.9 491.9 973.1 497 976.4 501.2 C979.7 505.4 981.5 510.7 984.6 515 C987.7 519.3 990.8 523.9 995 527 C999.2 530.1 1004.8 531.7 1009.8 533.7 C1014.8 535.8 1020.2 536.9 1025.1 539.3 C1030 541.6 1034.2 545.7 1039.2 547.8 C1044.2 549.9 1050 550.2 1055.1 552.1 C1060.2 554 1064.8 557 1069.8 559.1 C1074.8 561.2 1082.5 564 1085 565" fill="none" stroke="#9db3da" stroke-width="1.3" stroke-linejoin="round"/>
<path d="M900 455 C901.9 456.6 907.2 461.8 911.3 464.7 C915.4 467.6 920.4 469.2 924.4 472.2 C928.4 475.2 931.1 479.7 935.1 482.7 C939.1 485.7 944.1 487.2 948.3 490 C952.4 492.8 956.2 496 960 499.2 C963.8 502.4 967 506.4 971 509.3 C975 512.2 980 513.8 984 516.8 C988 519.8 993.2 525.3 995 527" fill="none" stroke="#9db3da" stroke-width="1.3" stroke-linejoin="round"/>
<path d="M760 643 C762.3 643.9 769.2 646.9 773.9 648.5 C778.6 650.1 783.6 650.9 788.4 652.4 C793.2 653.9 797.9 655.4 802.5 657.4 C807.1 659.4 811.4 662.5 816.1 664.1 C820.9 665.7 826.2 665.5 831 666.8 C835.8 668.1 839.9 671.9 845 672 C850.1 672.1 856 669.2 861.4 667.4 C866.8 665.6 871.9 663.3 877.2 661.2 C882.5 659.1 887.7 656.2 893 655 C898.3 653.8 903.7 653.7 909 653.7 C914.3 653.7 919.9 655.5 925 655 C930.1 654.5 934.8 652.5 939.4 650.6 C944 648.7 948.2 645.5 952.8 643.6 C957.4 641.7 962.4 640.5 967.2 639.2 C972.1 637.9 977.2 637.3 981.9 635.6 C986.6 633.9 990.7 630.7 995.4 628.9 C1000.1 627.1 1007.6 625.6 1010 625" fill="none" stroke="#9db3da" stroke-width="1.3" stroke-linejoin="round"/>
<path d="M925 655 C927 656.4 933.2 660.5 937 663.6 C940.8 666.8 943.9 670.8 947.7 673.9 C951.5 677 958 680.6 960 682" fill="none" stroke="#9db3da" stroke-width="1.3" stroke-linejoin="round"/>
<path d="M885 598 C884.2 601.7 879.6 613.5 880 620 C880.4 626.5 885.2 631.4 887.4 637.2 C889.6 643 892.1 652 893 655" fill="none" stroke="#9db3da" stroke-width="1.3" stroke-linejoin="round"/>
<path d="M845 672 C845.8 675 851.6 685.8 850 690 C848.4 694.2 840.1 694.3 835.4 697 C830.7 699.7 824.2 704.5 822 706" fill="none" stroke="#9db3da" stroke-width="1.3" stroke-linejoin="round"/>
<path d="M828 607 C828.6 609.7 830.6 617.8 831.9 623.3 C833.2 628.8 834 634.3 835.6 639.7 C837.2 645.1 839.6 650.2 841.2 655.6 C842.8 661 844.4 669.3 845 672" fill="none" stroke="#9db3da" stroke-width="1.3" stroke-linejoin="round"/>
<path d="M960 682 C957.4 682.4 949.6 684.2 944.4 684.5 C939.1 684.8 933.8 683.4 928.5 683.7 C923.2 684 918.1 685.7 912.9 686.4 C907.7 687.1 902.5 687.8 897.2 687.9 C892 688 886.6 686.6 881.4 687 C876.2 687.4 871 689.6 865.8 690.1 C860.6 690.6 852.6 690 850 690" fill="none" stroke="#9db3da" stroke-width="1.3" stroke-linejoin="round"/>
<path d="M612 187 C612 189.5 611.8 197 611.8 202 C611.8 207 612.3 212 612.3 217 C612.3 222 612.8 226.9 612 232 C611.2 237.1 608.4 242.4 607.7 247.7 C607 253 608.1 258.6 607.6 264 C607.1 269.4 605.4 277.3 605 280" fill="none" stroke="#9db3da" stroke-width="1.3" stroke-linejoin="round"/>
<path d="M605 280 C607.5 279.9 615.1 280.1 620.1 279.3 C625.1 278.5 629.9 276 634.9 275.3 C639.9 274.6 645 274.7 650 275 C655 275.3 659.8 275.9 664.6 276.9 C669.4 277.9 674 280 678.8 280.8 C683.6 281.6 688.8 280.8 693.6 281.8 C698.4 282.9 702.9 285.9 707.6 287.1 C712.4 288.4 717.2 288.6 722.1 289.3 C727 290.1 731.9 290.4 736.7 291.6 C741.5 292.8 745.9 295.5 750.7 296.4 C755.5 297.2 760.8 296.1 765.7 296.7 C770.6 297.3 777.6 299.4 780 300" fill="none" stroke="#9db3da" stroke-width="1.3" stroke-linejoin="round"/>
<path d="M1135 331 C1137.5 331.5 1145 332.6 1149.9 333.9 C1154.8 335.2 1159.3 337.8 1164.3 338.7 C1169.2 339.6 1174.6 338.7 1179.6 339.6 C1184.6 340.5 1189.2 343.1 1194.1 344.2 C1199 345.3 1204.1 345.7 1209.1 346.5 C1214.1 347.3 1221.5 348.6 1224 349" fill="none" stroke="#9db3da" stroke-width="1.3" stroke-linejoin="round"/>
<path d="M905 520 C902.6 520.8 895.7 523.8 890.9 525 C886.1 526.2 880.3 523.7 876 527 C871.7 530.3 866.8 542 865 545" fill="none" stroke="#9db3da" stroke-width="1.3" stroke-linejoin="round"/>
<path d="M872 464 C872 466.6 871.3 474.6 871.7 479.8 C872.1 485.1 874.2 490.2 874.5 495.5 C874.8 500.8 873 506.1 873.3 511.4 C873.5 516.6 875.5 524.4 876 527" fill="none" stroke="#9db3da" stroke-width="1.3" stroke-linejoin="round"/>
<path d="M890 325 C887 325 878 324.9 872 325.1 C866 325.3 860 326.2 854 326.3 C848 326.4 839 326.1 836 326" fill="none" stroke="#9db3da" stroke-width="1.3" stroke-linejoin="round"/>
<path d="M959 320 C959.1 323.1 960 332.2 959.8 338.3 C959.6 344.4 957.7 350.6 957.7 356.7 C957.7 362.8 959.6 371.9 960 375" fill="none" stroke="#9db3da" stroke-width="1.3" stroke-linejoin="round"/>
<path d="M735 167 C734.5 167.6 731 171.5 730.3 172.8 C729.6 174.1 728.5 178.3 728 180 C727.5 181.7 726.1 188.1 725.5 190.1 C724.9 192.1 722.1 198.2 722 200 C721.9 201.8 724 206.6 724.8 208.1 C725.6 209.6 729.8 213.6 730 215 C730.2 216.4 727.5 220.4 726.9 221.8 C726.3 223.2 724.8 227.4 724.1 228.7 C723.4 230 720 233.7 720 235 C720 236.3 723.5 240.7 724.6 241.9 C725.7 243.1 730.4 246 731.4 247.3 C732.4 248.6 734.9 253.6 735 255 C735.1 256.4 733.2 260.4 732.7 261.7 C732.2 263 730.7 267 730.2 268.3 C729.7 269.6 727.6 273.6 728 275 C728.4 276.4 733.4 280.5 734.6 282 C735.8 283.5 740.1 288.8 740 290 C739.9 291.2 734.9 292.9 733.9 293.9 C732.9 294.9 731.2 299.2 730 300 C728.8 300.8 723.6 301.1 722 301.4 C720.4 301.7 714.8 302.8 714 303" fill="none" stroke="#dba8dc" stroke-width="1" stroke-linejoin="round"/>
<path d="M728 180 C728.6 180.3 733.1 182.5 734.4 183.1 C735.7 183.7 739.7 185 741 185.5 C742.3 186 746.5 187.2 747.7 188 C748.9 188.8 751.9 192.4 753.1 193.1 C754.3 193.8 758.5 194.6 760 195 C761.5 195.4 766.1 196.5 767.6 197.1 C769.1 197.7 773.2 200.1 774.7 200.8 C776.2 201.5 780.6 203.3 782.1 203.7 C783.6 204.1 788.4 204.7 790 205 C791.6 205.3 796.2 206.3 797.7 206.9 C799.2 207.5 803.2 210.5 804.7 211 C806.2 211.5 811.2 211.5 812.7 211.9 C814.2 212.3 818.5 214.6 820 215 C821.5 215.4 826.2 215.3 827.7 215.7 C829.2 216.1 833.4 218.6 834.9 218.9 C836.4 219.2 841.4 218.4 842.9 218.7 C844.4 219 848.5 221.8 850 222 C851.5 222.2 856.1 220.8 857.6 220.5 C859.1 220.2 863.6 219.3 865.1 218.9 C866.6 218.5 870.9 216.7 872.4 216.3 C873.9 215.9 878.5 214.7 880 215 C881.5 215.3 886.2 218.5 887.9 219 C889.6 219.5 895 219.3 896.7 219.6 C898.4 219.9 903.5 222.1 905 222 C906.5 221.9 910.4 219 911.8 218.3 C913.2 217.6 917.5 215.6 918.8 214.8 C920.1 214 924.3 211.3 925 210 C925.7 208.7 925.7 203.6 926.2 202.1 C926.7 200.6 929.6 195.7 930 195" fill="none" stroke="#dba8dc" stroke-width="1" stroke-linejoin="round"/>
<path d="M708 396 C708.7 396.1 714 396.6 715.4 397 C716.8 397.4 720.9 400 722.4 400.3 C723.9 400.6 728.4 399.8 730 400 C731.6 400.2 736.8 401.8 738.5 402.3 C740.2 402.8 745.1 404.5 746.8 405.1 C748.4 405.7 753.7 407.1 755 408 C756.3 408.9 758.6 412.9 759.7 413.9 C760.8 414.9 765.3 417.1 766.3 418.2 C767.3 419.3 768.8 424.2 770 425 C771.2 425.8 776.6 426 778.3 426.2 C780 426.4 785 426.4 786.7 426.6 C788.4 426.8 793.4 428.2 795 428 C796.6 427.8 801.4 425 803.1 424.6 C804.8 424.2 810.4 424.6 812.1 424.1 C813.8 423.6 818.4 420.6 820 420 C821.6 419.4 826.6 418.2 828.3 418 C830 417.8 835.1 417.9 836.8 417.6 C838.5 417.3 843.5 415.6 845 415 C846.5 414.4 850.2 412.4 851.3 411.5 C852.4 410.6 854.7 406.6 855.8 405.6 C856.9 404.7 860.7 402.8 862 402 C863.3 401.2 867.4 399 868.5 398 C869.6 397 872.2 392.9 873.4 391.9 C874.5 390.9 878.7 388.8 880 388 C881.3 387.2 884.9 384.3 886.2 383.7 C887.6 383.1 892.1 382.3 893.5 381.7 C894.9 381.1 898.8 378.8 900 378 C901.2 377.2 904.3 374.1 905.6 373.5 C906.9 372.9 911.5 372.5 912.8 372 C914.1 371.5 917.8 369.4 919 368.7 C920.2 368 923.8 365.7 925 365 C926.2 364.3 929.8 362 931.1 361.5 C932.4 361 937 360.8 938.3 360.1 C939.5 359.5 942.4 355.8 943.6 355 C944.8 354.2 948.5 352.6 950 352 C951.5 351.4 956.7 349.4 958.4 348.8 C960.1 348.2 965.2 346.6 966.9 345.9 C968.6 345.2 973.6 342.9 975 342 C976.4 341.1 979.5 337.4 980.8 336.6 C982.1 335.8 987 334.9 988.4 334.2 C989.8 333.5 994.3 330.4 995 330" fill="none" stroke="#dba8dc" stroke-width="1" stroke-linejoin="round"/>
<path d="M925 210 C925.6 210.4 929.6 213.4 930.7 214.3 C931.8 215.2 934.7 218.3 935.6 219.4 C936.5 220.5 939.9 223.5 940 225 C940.1 226.5 937.2 232.8 936.7 234.8 C936.2 236.8 934.5 243.7 935 245 C935.5 246.3 940.7 246.8 942 247.6 C943.3 248.4 946.5 252 947.8 252.7 C949.1 253.4 953.6 254.4 955 255 C956.4 255.6 960.1 257.8 961.4 258.2 C962.7 258.6 967 259 968.4 259.4 C969.8 259.8 973.5 261.4 975 262 C976.5 262.6 981.3 265.1 983 265.4 C984.7 265.7 990.2 264.9 991.9 265.2 C993.6 265.5 998.6 266.9 1000 268 C1001.4 269.1 1004.4 274.6 1005.4 276.3 C1006.4 278 1010 283.6 1010 285 C1010 286.4 1005.8 288.8 1004.9 289.9 C1004 291 1002.3 295.3 1001.3 296.3 C1000.3 297.3 995.4 298.6 995 300 C994.6 301.4 996.6 308.1 997.1 310.1 C997.6 312.1 1000.2 318 1000 320 C999.8 322 995 328.5 995 330 C995 331.5 999.2 333.8 1000.2 334.8 C1001.2 335.8 1004.3 338.7 1005.3 339.7 C1006.3 340.7 1009.9 343.8 1010 345 C1010.1 346.2 1006.4 350.5 1005.9 352 C1005.4 353.5 1004.6 358.7 1005 360 C1005.4 361.3 1009.3 363.7 1010.2 364.8 C1011.1 365.9 1013.4 369.6 1014.4 370.6 C1015.4 371.6 1019.4 374.6 1020 375" fill="none" stroke="#dba8dc" stroke-width="1" stroke-linejoin="round"/>
<path d="M1045 204 C1044.7 204.7 1041.9 209.2 1041.6 210.6 C1041.3 212 1042.4 216.7 1042.2 218.1 C1042 219.5 1040.6 223.7 1040 225 C1039.4 226.3 1037 230.2 1036.3 231.5 C1035.6 232.8 1033.8 237 1033.2 238.3 C1032.6 239.7 1030.7 243.7 1030 245 C1029.3 246.3 1027.2 250.7 1026.2 251.8 C1025.2 252.9 1020.8 255.1 1019.7 256.1 C1018.6 257.1 1016.2 261 1015 262 C1013.8 263 1009.4 265.4 1007.9 266 C1006.4 266.6 1000.8 267.8 1000 268" fill="none" stroke="#dba8dc" stroke-width="1" stroke-linejoin="round"/>
<path d="M1150 240 C1150.1 240.7 1151.1 245.8 1151.2 247.3 C1151.3 248.8 1150.8 253.2 1150.9 254.7 C1151 256.2 1151.9 260.5 1152 262 C1152.1 263.5 1152.1 268.4 1151.7 269.9 C1151.3 271.4 1148.5 275.6 1148.1 277.1 C1147.7 278.6 1148.3 283.6 1148 285 C1147.7 286.4 1145.4 290.2 1144.9 291.5 C1144.4 292.8 1143.1 296.9 1142.6 298.3 C1142.1 299.7 1140.7 303.7 1140 305 C1139.3 306.3 1135.9 309.6 1135.3 311 C1134.7 312.4 1134.6 317.3 1134.1 318.7 C1133.6 320.1 1130.3 323.4 1130 325 C1129.7 326.6 1130.6 333 1130.8 335 C1131 337 1132.1 343 1132 345 C1131.9 347 1130.5 353 1130.1 355 C1129.7 357 1127.7 363.3 1128 365 C1128.3 366.7 1132.3 370.3 1133 371.8 C1133.7 373.3 1133.5 378.7 1135 380 C1136.5 381.3 1146.7 384.5 1148 385" fill="none" stroke="#dba8dc" stroke-width="1" stroke-linejoin="round"/>
<path d="M1020 375 C1020.4 375.6 1023.2 380 1023.8 381.4 C1024.4 382.8 1025.2 387.4 1025.8 388.8 C1026.4 390.2 1030 393.5 1030 395 C1030 396.5 1026.8 401.8 1026 403.5 C1025.2 405.2 1021.7 410.6 1022 412 C1022.3 413.4 1027.7 415.9 1028.9 417.1 C1030.1 418.3 1032.6 423 1033.7 424.3 C1034.8 425.6 1038.8 429 1040 430 C1041.2 431 1045 433 1046 434 C1047 435 1049.3 438.7 1050.2 439.8 C1051.1 440.9 1053.8 444.7 1055 445 C1056.2 445.3 1061.2 443.6 1062.7 443.1 C1064.2 442.6 1068.8 440.9 1070 440 C1071.2 439.1 1073.3 435.3 1074.4 434.4 C1075.5 433.5 1080 432 1081.1 431.1 C1082.2 430.2 1083.8 426.1 1085 425 C1086.2 423.9 1091.2 421.3 1092.7 420.3 C1094.2 419.3 1098.7 416 1100 415 C1101.3 414 1104.8 411 1106 410 C1107.2 409 1110.6 405.6 1112 405 C1113.4 404.4 1118.8 404.2 1120.4 403.7 C1122 403.2 1127.1 401.1 1128 400 C1128.9 398.9 1128.7 394.2 1129.2 392.9 C1129.7 391.6 1132.1 388 1132.7 386.7 C1133.3 385.4 1134.8 380.7 1135 380" fill="none" stroke="#dba8dc" stroke-width="1" stroke-linejoin="round"/>
<path d="M1040 430 C1039.7 430.7 1037.4 435.3 1036.8 436.7 C1036.2 438.1 1035.1 442.6 1034.4 443.9 C1033.7 445.2 1030.3 448.4 1030 450 C1029.7 451.6 1030.7 458.3 1031.2 460.3 C1031.7 462.3 1034.9 468.4 1035 470 C1035.1 471.6 1032.5 475.4 1031.8 476.7 C1031.1 478 1028.6 481.8 1027.9 483.1 C1027.2 484.4 1024.9 488.6 1025 490 C1025.1 491.4 1027.7 496.3 1028.8 497.6 C1029.9 498.9 1034.5 501.7 1035.6 502.9 C1036.7 504.1 1040 508.7 1040 510 C1040 511.3 1036.6 514.9 1036 516.3 C1035.4 517.6 1034.3 522.1 1033.7 523.5 C1033.1 524.9 1029.8 528.8 1030 530 C1030.2 531.2 1035.1 533.9 1036.1 535.1 C1037.1 536.3 1038.7 541 1039.6 542.3 C1040.5 543.6 1044.1 546.6 1045 548 C1045.9 549.4 1048.3 554.4 1048.8 556.1 C1049.3 557.8 1049.3 563.6 1050 565 C1050.7 566.4 1054.8 569 1056 570 C1057.2 571 1061.8 573.8 1062 575 C1062.2 576.2 1058.5 580.7 1057.8 582.2 C1057.1 583.7 1054.5 588.8 1055 590 C1055.5 591.2 1061.3 593.5 1062.8 594.5 C1064.3 595.5 1069.3 599.5 1070 600" fill="none" stroke="#dba8dc" stroke-width="1" stroke-linejoin="round"/>
<path d="M862 402 C862.3 402.7 864 407.9 864.8 409.2 C865.6 410.5 869.9 413.7 870 415 C870.1 416.3 867 421.1 866.2 422.6 C865.4 424.1 861.5 428.8 862 430 C862.5 431.2 869.6 433.3 871.4 434.3 C873.2 435.3 878.1 439.1 880 440 C881.9 440.9 887.9 442.4 889.9 442.9 C891.9 443.4 898.3 445.4 900 445 C901.7 444.6 905 439.6 906.5 438.6 C908 437.6 913.6 436.1 915 435 C916.4 433.9 919 429 920 427.5 C921 426 925 421.5 925 420 C925 418.5 921 414 920 412.5 C919 411 916.1 406.4 915 405 C913.9 403.6 910.3 399.5 909.3 398 C908.3 396.5 905.9 392 905 390 C904.1 388 900.5 379.2 900 378" fill="none" stroke="#dba8dc" stroke-width="1" stroke-linejoin="round"/>
<path d="M795 428 C795.3 428.7 797.5 433.6 797.7 435.1 C797.9 436.6 797.1 441.4 797.3 442.9 C797.5 444.4 800 448.6 800 450 C800 451.4 797.9 455.6 797.2 456.9 C796.5 458.2 793.3 461.6 792.6 462.9 C791.9 464.2 789.7 468.7 790 470 C790.3 471.3 794.5 475 795.9 476 C797.3 477 802.3 478.7 803.7 479.6 C805.1 480.5 809.7 483.5 810 485 C810.3 486.5 806.8 492.7 806.3 494.7 C805.8 496.7 804.6 503.5 805 505 C805.4 506.5 809.4 508.6 810.5 509.5 C811.6 510.4 814.6 513.4 815.6 514.4 C816.6 515.4 819.9 518.8 820 520 C820.1 521.2 817.4 525.1 817 526.5 C816.6 527.9 816.7 532.6 816.2 534 C815.7 535.4 811.8 538.6 812 540 C812.2 541.4 817 546.2 818.3 547.7 C819.6 549.2 824.9 553.5 825 555 C825.1 556.5 820.8 560.9 819.8 562.4 C818.8 563.9 815.5 569.2 815 570" fill="none" stroke="#dba8dc" stroke-width="1" stroke-linejoin="round"/>
<path d="M704 586 C704.7 586.3 709.8 588 711.2 588.6 C712.6 589.2 716.6 591.3 718 591.9 C719.4 592.5 723.3 594.9 725 595 C726.7 595.1 733.1 593.3 735.1 592.8 C737.1 592.3 743.3 590.1 745 590 C746.7 589.9 751.2 591.1 752.5 591.8 C753.8 592.5 757 596.1 758.2 596.9 C759.5 597.7 763.7 600.1 765 600 C766.3 599.9 770.1 596.8 771.4 596.1 C772.7 595.4 776.6 593.3 778 592.7 C779.4 592.1 783.7 590.7 785 590 C786.3 589.3 790 587 791 586 C792 585 793.8 580.8 794.7 579.7 C795.6 578.6 798.7 575.6 800 575 C801.3 574.4 806.3 574 807.8 573.5 C809.3 573 813.5 570.1 815 570 C816.5 569.9 821.4 572.4 823.1 572.7 C824.8 573 830.1 572.4 831.8 572.6 C833.5 572.8 838.3 574.9 840 575 C841.7 575.1 847 574.2 848.6 573.6 C850.2 573 854.8 570 856.4 569.4 C858 568.8 863.3 568 865 568 C866.7 568 871.9 568.9 873.6 569.4 C875.3 569.9 880 572.4 881.6 573 C883.2 573.6 888.4 575.2 890 575 C891.6 574.8 896.2 571.6 897.9 571.2 C899.6 570.8 905.1 571.2 906.8 570.9 C908.5 570.6 913.4 568 915 568 C916.6 568 921.5 570.3 923.2 570.7 C924.9 571.1 930 572 931.7 572.4 C933.4 572.8 938.1 574.8 940 575 C941.9 575.2 948.4 574.7 950.4 574.2 C952.4 573.7 958.3 569.9 960 570 C961.7 570.1 966.1 573.8 967.6 574.8 C969.1 575.8 974.3 579.5 975 580" fill="none" stroke="#dba8dc" stroke-width="1" stroke-linejoin="round"/>
<path d="M975 580 C975.4 580.8 978.4 586.4 979.4 587.9 C980.4 589.4 983.7 594.6 985 595 C986.3 595.4 990.7 592.1 992.2 591.6 C993.7 591.1 998.4 590.6 1000 590 C1001.6 589.4 1006.6 587 1008.1 586 C1009.6 585 1013.5 581 1015 580 C1016.5 579 1021.4 576.7 1022.9 575.7 C1024.4 574.7 1028.8 571.3 1030 570 C1031.2 568.7 1033.7 563.9 1034.8 562.5 C1035.9 561.1 1040.2 557.7 1041.2 556.2 C1042.2 554.8 1044.6 548.8 1045 548" fill="none" stroke="#dba8dc" stroke-width="1" stroke-linejoin="round"/>
<path d="M975 580 C975.2 581 976.5 588.1 977 590.1 C977.5 592.1 979.2 598.2 980 600 C980.8 601.8 983.9 606.1 984.9 607.6 C985.9 609.1 988.9 613.9 990 615 C991.1 616.1 995.1 617.9 996.1 618.9 C997.1 619.9 999.4 623.6 1000 625 C1000.6 626.4 1001.6 631.1 1002.1 632.6 C1002.6 634.1 1004 638.3 1005 640 C1006 641.7 1011.3 649 1012 650" fill="none" stroke="#dba8dc" stroke-width="1" stroke-linejoin="round"/>
<path d="M597 308 C597.7 307.8 602.7 306 604.2 305.7 C605.7 305.4 610.3 305.4 611.8 305.1 C613.3 304.8 617.6 303.1 619 303 C620.4 302.9 624.6 303.8 625.9 304.3 C627.2 304.8 630.8 307.1 632.1 307.6 C633.4 308.1 637.6 308.7 639 309 C640.4 309.3 644.3 310.6 645.6 310.9 C646.9 311.1 651.1 311.3 652.4 311.5 C653.7 311.7 657.7 313 659 313 C660.3 313 664.5 311.9 665.8 311.3 C667 310.7 670.3 307.9 671.5 307.3 C672.7 306.7 676.7 305.4 678 305 C679.3 304.6 683.3 303.3 684.6 302.9 C685.9 302.5 690.1 301.6 691.4 301.2 C692.7 300.8 696.5 299.1 698 299 C699.5 298.9 704.7 299.4 706.3 299.8 C707.9 300.2 712.6 302.4 714 303 C715.4 303.6 718.7 305.6 719.9 306.2 C721.1 306.8 725.2 308 726 309 C726.8 310 727.2 315 727.4 316.5 C727.6 318 727.4 322.7 728 324 C728.6 325.3 732.3 328.5 733.3 329.7 C734.3 330.9 738 334.9 738 336 C738 337.1 734 339.6 733.2 340.7 C732.4 341.8 730.9 345.7 730.2 346.8 C729.5 347.9 727.1 350.9 726 352 C724.9 353.1 720.7 356.3 719.5 357.5 C718.3 358.7 715 362.8 714 364 C713 365.2 710.3 368.4 709.5 369.6 C708.7 370.8 706.2 374.7 706 376 C705.8 377.3 707.1 381.3 707.2 382.6 C707.3 383.9 706.7 388.1 706.8 389.4 C706.9 390.7 707.5 394.9 708 396 C708.5 397.1 711.5 398.9 712 400 C712.5 401.1 712.9 405.6 713 407 C713.1 408.4 713.3 412.6 713.3 414 C713.3 415.4 713.5 419.8 713 421 C712.5 422.2 709.5 425.1 708.8 426.2 C708.1 427.3 706.6 431.2 705.8 432.3 C705 433.4 701.2 435.7 701 437 C700.8 438.3 703.4 443.6 704.1 445.2 C704.8 446.8 707.7 451.5 708 453 C708.3 454.5 706.9 458.6 706.7 460 C706.5 461.4 706.3 465.6 706.1 467 C705.9 468.4 705.8 473.4 705 474 C704.2 474.6 699.5 473.3 698.1 473.4 C696.7 473.5 692.8 475.2 691.4 475.4 C690 475.6 686 475.5 684.6 475.6 C683.2 475.7 679.2 476 677.8 476.1 C676.4 476.2 671 476.3 671 477 C671 477.7 676.6 481.5 677.8 482.8 C679 484.1 682.2 488.5 683 490 C683.8 491.5 684.8 496.5 685.3 498.1 C685.8 499.7 687.1 504.6 688 506 C688.9 507.4 692.9 510.8 694 512.1 C695.1 513.4 698 517.8 699 519 C700 520.2 703.9 522.8 704 524 C704.1 525.2 701 529.5 700.1 530.7 C699.2 531.9 695.6 535.1 694.7 536.3 C693.8 537.5 691.6 541.6 691 543 C690.4 544.4 689.6 548.7 689.1 550.1 C688.6 551.5 686.1 555.4 685.6 556.8 C685.1 558.2 683.9 562.5 684 564 C684.1 565.5 685.8 569.9 686.4 571.3 C687 572.7 689.6 576.5 690.3 577.9 C691 579.3 691.6 584.2 693 585 C694.4 585.8 702.9 585.1 704 586 C705.1 586.9 704.6 593.1 704 594 C703.4 594.9 699 594.5 697.8 594.9 C696.6 595.3 693.4 597.5 692.2 597.9 C691 598.3 686.9 598.1 686 599 C685.1 599.9 684 605.6 683.4 607.2 C682.8 608.8 680.8 613.4 680 615 C679.2 616.6 676.7 621.3 675.9 622.9 C675.1 624.5 672.2 629.4 672 631 C671.8 632.6 673.9 637.3 674.1 638.9 C674.3 640.5 673.8 645.3 674 647 C674.2 648.7 675.7 653.9 676.2 655.6 C676.7 657.3 678.7 663.2 679 664" fill="none" stroke="#cc98d3" stroke-width="1.1" stroke-linejoin="round"/>
<path d="M1014 181 C1014.3 181.5 1016.6 185.3 1017.2 186.4 C1017.8 187.5 1019.1 191.2 1020 192 C1020.9 192.8 1024.7 194 1025.9 194.4 C1027.1 194.8 1030.8 195.4 1032 196 C1033.2 196.6 1037.1 199.4 1038.4 200.2 C1039.7 201 1043.5 203.3 1045 204 C1046.5 204.7 1051.5 206.3 1053 207.1 C1054.5 207.9 1058.8 211.2 1060 212 C1061.2 212.8 1063.8 215 1064.8 215.6 C1065.8 216.2 1069.4 217.4 1070.4 218 C1071.4 218.6 1074 221.3 1075 222 C1076 222.7 1079.3 224.2 1080.3 224.9 C1081.3 225.6 1083.7 228.4 1084.7 229.1 C1085.7 229.8 1088.7 231.4 1090 232 C1091.3 232.6 1096.3 234.7 1097.8 235.5 C1099.3 236.3 1103.5 239.6 1105 240 C1106.5 240.4 1111.1 240 1112.6 239.8 C1114.1 239.6 1118.5 238.2 1120 238 C1121.5 237.8 1126.1 237.7 1127.6 237.5 C1129.1 237.3 1133.5 236 1135 236 C1136.5 236 1141 237.4 1142.5 237.8 C1144 238.2 1148.6 239.8 1150 240 C1151.4 240.2 1155.3 240.1 1156.6 239.9 C1157.9 239.7 1161.7 237.9 1163 238 C1164.3 238.1 1168.1 240.3 1169.3 241 C1170.5 241.7 1173.7 244.4 1175 245 C1176.3 245.6 1181.1 246.8 1182.6 247.3 C1184.1 247.8 1188.8 249.3 1190 250 C1191.2 250.7 1194 253.2 1195 254 C1196 254.8 1198.9 257.5 1200 258 C1201.1 258.5 1205.2 258.5 1206.4 258.9 C1207.6 259.3 1210.8 261.9 1212 262 C1213.2 262.1 1217.3 260.7 1218.6 260.3 C1219.9 259.9 1223.6 258.1 1225 258 C1226.4 257.9 1231.1 259.4 1232.6 259.8 C1234.1 260.2 1238.5 262 1240 262 C1241.5 262 1246 260.2 1247.5 259.8 C1249 259.4 1253.5 257.9 1255 258 C1256.5 258.1 1260.7 260.7 1262.2 261.1 C1263.7 261.5 1268.6 261.8 1270 262 C1271.4 262.2 1275.2 262.6 1276.5 262.8 C1277.8 263 1282.3 263.9 1283 264" fill="none" stroke="#cc98d3" stroke-width="1.1" stroke-linejoin="round"/>
<g font-family="DejaVu Sans,Liberation Sans,sans-serif" text-anchor="middle" paint-order="stroke" stroke-linejoin="round">
<text x="884" y="192" font-size="9.9" fill="#383838" stroke="#fff" stroke-width="2.4">Santander</text>
<text x="784" y="260" font-size="9.9" fill="#383838" stroke="#fff" stroke-width="2.4">León</text>
<text x="890" y="279" font-size="9.9" fill="#383838" stroke="#fff" stroke-width="2.4">Burgos</text>
<text x="959" y="324" font-size="9.9" fill="#383838" stroke="#fff" stroke-width="2.4">Soria</text>
<text x="773" y="344" font-size="9.9" fill="#383838" stroke="#fff" stroke-width="2.4">Zamora</text>
<text x="778" y="385" font-size="9.9" fill="#383838" stroke="#fff" stroke-width="2.4">Salamanca</text>
<text x="833" y="408" font-size="9.9" fill="#383838" stroke="#fff" stroke-width="2.4">Ávila</text>
<text x="890" y="426" font-size="13.5" fill="#383838" stroke="#fff" stroke-width="2.6">Madrid</text>
<text x="872" y="468" font-size="9.9" fill="#383838" stroke="#fff" stroke-width="2.4">Toledo</text>
<text x="979" y="452" font-size="9.9" fill="#383838" stroke="#fff" stroke-width="2.4">Cuenca</text>
<text x="1037" y="431" font-size="9.9" fill="#383838" stroke="#fff" stroke-width="2.4">Teruel</text>
<text x="877" y="531" font-size="9.9" fill="#383838" stroke="#fff" stroke-width="2.4">Ciudad Real</text>
<text x="704" y="539" font-size="9.9" fill="#383838" stroke="#fff" stroke-width="2.4">Badajoz</text>
<text x="995" y="530" font-size="9.9" fill="#383838" stroke="#fff" stroke-width="2.4">Albacete</text>
<text x="1024" y="569" font-size="9.9" fill="#383838" stroke="#fff" stroke-width="2.4">Jumilla</text>
<text x="1044" y="632" font-size="9.9" fill="#383838" stroke="#fff" stroke-width="2.4">Cartagena</text>
<text x="960" y="686" font-size="9.9" fill="#383838" stroke="#fff" stroke-width="2.4">Almería</text>
<text x="828" y="611" font-size="9.9" fill="#383838" stroke="#fff" stroke-width="2.4">Córdoba</text>
<text x="897" y="597" font-size="9.9" fill="#383838" stroke="#fff" stroke-width="2.4">Linares</text>
<text x="762" y="647" font-size="9.9" fill="#383838" stroke="#fff" stroke-width="2.4">Sevilla</text>
<text x="678" y="660" font-size="9.9" fill="#383838" stroke="#fff" stroke-width="2.4">Ayamonte</text>
<text x="747" y="708" font-size="9.9" fill="#383838" stroke="#fff" stroke-width="2.4">Cádiz</text>
<text x="822" y="710" font-size="9.9" fill="#383838" stroke="#fff" stroke-width="2.4">Marbella</text>
<text x="1224" y="353" font-size="9.9" fill="#383838" stroke="#fff" stroke-width="2.4">Barcelona</text>
<text x="1164" y="370" font-size="9.9" fill="#383838" stroke="#fff" stroke-width="2.4">Reus</text>
<text x="1135" y="335" font-size="9.9" fill="#383838" stroke="#fff" stroke-width="2.4">Lleida</text>
<text x="1265" y="307" font-size="9.9" fill="#383838" stroke="#fff" stroke-width="2.4">Girona</text>
<text x="1077.5" y="295" font-size="9.9" fill="#383838" stroke="#fff" stroke-width="2.4">Huesca</text>
<text x="670" y="227" font-size="9.9" fill="#383838" stroke="#fff" stroke-width="2.4">Lugo</text>
<text x="622" y="199" font-size="9.9" fill="#383838" stroke="#fff" stroke-width="2.4">A Coruña</text>
<text x="604" y="287" font-size="9.9" fill="#383838" stroke="#fff" stroke-width="2.4">Vigo</text>
<text x="1049" y="203" text-anchor="end" font-size="9.9" fill="#383838" stroke="#fff" stroke-width="2.4">Donostia-San Sebastián</text>
<text x="1099" y="457" font-size="9.9" fill="#383838" stroke="#fff" stroke-width="2.4">Castelló de la Plana</text>
<text x="829" y="321" font-size="9.9" font-style="italic" fill="#a070a8" stroke="#fff" stroke-width="2">Castilla y León</text>
<text x="1190" y="318" font-size="9.9" font-style="italic" fill="#a070a8" stroke="#fff" stroke-width="2">Catalunya</text>
<text x="1060" y="353" font-size="9.9" font-style="italic" fill="#a070a8" stroke="#fff" stroke-width="2">Aragón</text>
<text x="950" y="500" font-size="9.9" font-style="italic" fill="#a070a8" stroke="#fff" stroke-width="2">Castilla-La Mancha</text>
<text x="750" y="518" font-size="9.9" font-style="italic" fill="#a070a8" stroke="#fff" stroke-width="2">Extremadura</text>
<text x="839" y="651" font-size="9.9" font-style="italic" fill="#a070a8" stroke="#fff" stroke-width="2">Andalucía</text>
<text x="1015" y="609" font-size="9.9" font-style="italic" fill="#a070a8" stroke="#fff" stroke-width="2">Región de Murcia</text>
<text x="1301.5" y="490" font-size="9.9" font-style="italic" fill="#a070a8" stroke="#fff" stroke-width="2">Balears</text>
<text x="1057" y="480" font-size="9.9" font-style="italic" fill="#a070a8" stroke="#fff" stroke-width="2">Comunitat Valenciana</text>
</g>
<use href="#sh" x="648" y="187"/>
<use href="#sh" x="635" y="192"/>
<use href="#sh" x="623" y="196"/>
<use href="#sh" x="696" y="183"/>
<use href="#sh" x="714" y="175"/>
<use href="#sh" x="689" y="168"/>
<use href="#sh" x="753" y="183"/>
<use href="#sh" x="772" y="177"/>
<use href="#sh" x="763" y="212"/>
<use href="#sh" x="746" y="213"/>
<use href="#sh" x="737" y="224"/>
<use href="#sh" x="758" y="213"/>
<use href="#sh" x="772" y="212"/>
<use href="#sh" x="732" y="211"/>
<use href="#sh" x="711" y="239"/>
<use href="#sh" x="688" y="230"/>
<use href="#sh" x="720" y="261"/>
<use href="#sh" x="613" y="264"/>
<use href="#sh" x="616" y="283"/>
<use href="#sh" x="611" y="243"/>
<use href="#sh" x="649" y="249"/>
<use href="#sh" x="672" y="264"/>
<use href="#sh" x="666" y="253"/>
<use href="#sh" x="666" y="278"/>
<use href="#sh" x="631" y="286"/>
<use href="#sh" x="636" y="278"/>
<use href="#sh" x="662" y="295"/>
<use href="#sh" x="672" y="300"/>
<use href="#sh" x="832" y="183"/>
<use href="#sh" x="834" y="195"/>
<use href="#sh" x="798" y="212"/>
<use href="#sh" x="803" y="198"/>
<use href="#sh" x="827" y="207"/>
<use href="#sh" x="834" y="226"/>
<use href="#sh" x="867" y="217"/>
<use href="#sh" x="860" y="212"/>
<use href="#sh" x="828" y="219"/>
<use href="#sh" x="856" y="221"/>
<use href="#sh" x="938" y="193"/>
<use href="#sh" x="950" y="198"/>
<use href="#sh" x="986" y="193"/>
<use href="#sh" x="1000" y="214"/>
<use href="#sh" x="976" y="198"/>
<use href="#sh" x="995" y="201"/>
<use href="#sh" x="978" y="230"/>
<use href="#sh" x="945" y="217"/>
<use href="#sh" x="965" y="219"/>
<use href="#sh" x="946" y="252"/>
<use href="#sh" x="955" y="288"/>
<use href="#sh" x="955" y="282"/>
<use href="#sh" x="1064" y="237"/>
<use href="#sh" x="1134" y="258"/>
<use href="#sh" x="1118" y="256"/>
<use href="#sh" x="1152" y="261"/>
<use href="#sh" x="1217" y="289"/>
<use href="#sh" x="1217" y="274"/>
<use href="#sh" x="1276" y="289"/>
<use href="#sh" x="1103" y="294"/>
<use href="#sh" x="1110" y="297"/>
<use href="#sh" x="1111" y="318"/>
<use href="#sh" x="1082" y="338"/>
<use href="#sh" x="1085" y="345"/>
<use href="#sh" x="1092" y="351"/>
<use href="#sh" x="1130" y="418"/>
<use href="#sh" x="1136.6" y="403.4"/>
<use href="#sh" x="1103" y="459"/>
<use href="#sh" x="1105" y="452"/>
<use href="#sh" x="1109" y="442"/>
<use href="#sh" x="1093" y="479"/>
<use href="#sh" x="1031" y="469"/>
<use href="#sh" x="1061" y="488"/>
<use href="#sh" x="1045" y="482"/>
<use href="#sh" x="1083" y="482"/>
<use href="#sh" x="1096" y="508"/>
<use href="#sh" x="1083" y="516"/>
<use href="#sh" x="1087" y="540"/>
<use href="#sh" x="1108" y="543"/>
<use href="#sh" x="1115" y="545"/>
<use href="#sh" x="1119" y="539"/>
<use href="#sh" x="1062" y="546"/>
<use href="#sh" x="1060" y="554"/>
<use href="#sh" x="1088" y="562"/>
<use href="#sh" x="1056" y="583"/>
<use href="#sh" x="1063" y="587"/>
<use href="#sh" x="1072" y="592"/>
<use href="#sh" x="915" y="593"/>
<use href="#sh" x="956" y="626"/>
<use href="#sh" x="970" y="651"/>
<use href="#sh" x="1001" y="651"/>
<use href="#sh" x="985" y="642"/>
<use href="#sh" x="925" y="666"/>
<use href="#sh" x="902" y="644"/>
<use href="#sh" x="765" y="572"/>
<use href="#sh" x="761" y="619"/>
<use href="#sh" x="769" y="640"/>
<use href="#sh" x="790" y="632"/>
<use href="#sh" x="717" y="644"/>
<use href="#sh" x="756" y="698"/>
<use href="#sh" x="760" y="701"/>
<use href="#sh" x="785" y="421"/>
<use href="#sh" x="912" y="410"/>
<use href="#sh" x="908" y="409"/>
<use href="#sh" x="903" y="408"/>
<use href="#sh" x="897" y="427"/>
<use href="#sh" x="897" y="421"/>
<use href="#sh" x="882" y="387"/>
<use href="#sh" x="897" y="411"/>
<use href="#sh" x="876" y="519"/>
<use href="#mk" x="648" y="187"/><use href="#iu" x="648" y="187"/><use href="#pl" x="633" y="175"/>
<use href="#mk" x="635" y="192"/><use href="#iw" x="635" y="192"/>
<use href="#mk" x="623" y="196"/><use href="#iw" x="623" y="196"/>
<use href="#mk" x="696" y="183"/><use href="#ij" x="696" y="183"/>
<use href="#mk" x="714" y="175"/><use href="#iw" x="714" y="175"/>
<use href="#mk" x="689" y="168"/><use href="#iw" x="689" y="168"/><circle cx="679" cy="157" r="7.2" fill="url(#br)" stroke="#777" stroke-width="0.9"/>
<use href="#mk" x="753" y="183"/><use href="#iw" x="753" y="183"/>
<use href="#mk" x="772" y="177"/><use href="#iw" x="772" y="177"/>
<use href="#mk" x="763" y="212"/><use href="#ij" x="763" y="212"/>
<use href="#mk" x="746" y="213"/><use href="#ij" x="746" y="213"/>
<use href="#mk" x="737" y="224"/><use href="#iw" x="737" y="224"/>
<use href="#mk" x="758" y="213"/><use href="#ij" x="758" y="213"/>
<use href="#mk" x="772" y="212"/><use href="#ij" x="772" y="212"/>
<circle cx="737" cy="173" r="7.2" fill="url(#by)" stroke="#777" stroke-width="0.9"/><circle cx="733" cy="184" r="7.2" fill="url(#by)" stroke="#777" stroke-width="0.9"/><circle cx="741" cy="183" r="7.2" fill="url(#by)" stroke="#777" stroke-width="0.9"/><circle cx="745" cy="193" r="7.2" fill="url(#br)" stroke="#777" stroke-width="0.9"/>
<use href="#mk" x="732" y="211"/><use href="#iw" x="732" y="211"/><circle cx="721" cy="199" r="7.2" fill="url(#bk)" stroke="#777" stroke-width="0.9"/>
<use href="#mk" x="711" y="239"/><use href="#iw" x="711" y="239"/>
<use href="#mk" x="688" y="230"/><use href="#iw" x="688" y="230"/><circle cx="677" cy="219" r="7.2" fill="url(#br)" stroke="#777" stroke-width="0.9"/>
<use href="#mk" x="720" y="261"/><use href="#iw" x="720" y="261"/>
<use href="#mk" x="613" y="264"/><use href="#iw" x="613" y="264"/>
<use href="#mk" x="616" y="283"/><use href="#iw" x="616" y="283"/>
<use href="#mk" x="611" y="243"/><use href="#iw" x="611" y="243"/>
<use href="#mk" x="649" y="249"/><use href="#iw" x="649" y="249"/><circle cx="638" cy="237" r="7.2" fill="url(#br)" stroke="#777" stroke-width="0.9"/>
<use href="#mk" x="672" y="264"/><use href="#iw" x="672" y="264"/>
<use href="#mk" x="666" y="253"/><use href="#iw" x="666" y="253"/><circle cx="654" cy="242" r="7.2" fill="url(#br)" stroke="#777" stroke-width="0.9"/>
<use href="#mk" x="666" y="278"/><use href="#iw" x="666" y="278"/>
<use href="#mk" x="631" y="286"/><use href="#iw" x="631" y="286"/>
<use href="#mk" x="636" y="278"/><use href="#ir" x="636" y="278"/><use href="#pl" x="625" y="267"/>
<use href="#mk" x="662" y="295"/><use href="#iw" x="662" y="295"/>
<use href="#mk" x="672" y="300"/><use href="#iw" x="672" y="300"/><circle cx="660" cy="289" r="7.2" fill="url(#br)" stroke="#777" stroke-width="0.9"/>
<use href="#mk" x="832" y="183"/><use href="#iw" x="832" y="183"/>
<use href="#mk" x="834" y="195"/><use href="#iw" x="834" y="195"/>
<use href="#mk" x="798" y="212"/><use href="#ij" x="798" y="212"/><circle cx="785" cy="200" r="7.2" fill="url(#br)" stroke="#777" stroke-width="0.9"/>
<use href="#mk" x="803" y="198"/><use href="#ij" x="803" y="198"/><circle cx="793" cy="187" r="7.2" fill="url(#br)" stroke="#777" stroke-width="0.9"/>
<use href="#mk" x="827" y="207"/><use href="#ij" x="827" y="207"/>
<use href="#mk" x="834" y="226"/><use href="#ij" x="834" y="226"/>
<use href="#mk" x="867" y="217"/><use href="#ij" x="867" y="217"/><circle cx="845" cy="200" r="7.2" fill="url(#br)" stroke="#777" stroke-width="0.9"/><circle cx="857" cy="203" r="7.2" fill="url(#br)" stroke="#777" stroke-width="0.9"/>
<use href="#mk" x="860" y="212"/><use href="#ij" x="860" y="212"/>
<use href="#mk" x="828" y="219"/><use href="#ij" x="828" y="219"/><circle cx="815" cy="208" r="7.2" fill="url(#br)" stroke="#777" stroke-width="0.9"/>
<use href="#mk" x="856" y="221"/><use href="#ij" x="856" y="221"/><circle cx="844" cy="209" r="7.2" fill="url(#br)" stroke="#777" stroke-width="0.9"/>
<use href="#mk" x="938" y="193"/><use href="#iw" x="938" y="193"/><use href="#pl" x="932" y="187"/>
<use href="#mk" x="950" y="198"/><use href="#iw" x="950" y="198"/>
<use href="#mk" x="986" y="193"/><use href="#iw" x="986" y="193"/>
<use href="#mk" x="1000" y="214"/><use href="#iw" x="1000" y="214"/>
<use href="#mk" x="976" y="198"/><use href="#iw" x="976" y="198"/><circle cx="964" cy="188" r="7.2" fill="url(#br)" stroke="#777" stroke-width="0.9"/>
<use href="#mk" x="995" y="201"/><use href="#iw" x="995" y="201"/>
<use href="#mk" x="978" y="230"/><use href="#iw" x="978" y="230"/>
<use href="#mk" x="945" y="217"/><use href="#iw" x="945" y="217"/><circle cx="933" cy="205" r="7.2" fill="url(#br)" stroke="#777" stroke-width="0.9"/>
<use href="#mk" x="965" y="219"/><use href="#iw" x="965" y="219"/><circle cx="954" cy="207" r="7.2" fill="url(#br)" stroke="#777" stroke-width="0.9"/>
<use href="#mk" x="946" y="252"/><use href="#iw" x="946" y="252"/>
<use href="#mk" x="955" y="288"/><use href="#ij" x="955" y="288"/><use href="#mt" x="953.5" y="291"/>
<use href="#mk" x="955" y="282"/><use href="#ij" x="955" y="282"/><circle cx="944" cy="271" r="7.2" fill="url(#br)" stroke="#777" stroke-width="0.9"/><use href="#mt" x="953.5" y="285"/>
<use href="#mk" x="1064" y="237"/><use href="#ij" x="1064" y="237"/><circle cx="1052" cy="226" r="7.2" fill="url(#by)" stroke="#777" stroke-width="0.9"/>
<use href="#mk" x="1134" y="258"/><use href="#iw" x="1134" y="258"/>
<use href="#mk" x="1118" y="256"/><use href="#iw" x="1118" y="256"/><circle cx="1106" cy="245" r="7.2" fill="url(#br)" stroke="#777" stroke-width="0.9"/>
<use href="#mk" x="1152" y="261"/><use href="#ij" x="1152" y="261"/><circle cx="1141" cy="249" r="7.2" fill="url(#br)" stroke="#777" stroke-width="0.9"/>
<use href="#mk" x="1217" y="289"/><use href="#ij" x="1217" y="289"/>
<use href="#mk" x="1217" y="274"/><use href="#iw" x="1217" y="274"/><circle cx="1205" cy="262" r="7.2" fill="url(#bg)" stroke="#777" stroke-width="0.9"/>
<use href="#mk" x="1276" y="289"/><use href="#iw" x="1276" y="289"/>
<use href="#mk" x="1103" y="294"/><use href="#iw" x="1103" y="294"/>
<use href="#mk" x="1110" y="297"/><use href="#ir" x="1110" y="297"/>
<use href="#mk" x="1111" y="318"/><use href="#iw" x="1111" y="318"/><circle cx="1099" cy="306" r="7.2" fill="url(#bk)" stroke="#777" stroke-width="0.9"/>
<use href="#mk" x="1082" y="338"/><use href="#ij" x="1082" y="338"/>
<use href="#mk" x="1085" y="345"/><use href="#ij" x="1085" y="345"/>
<use href="#mk" x="1092" y="351"/><use href="#ij" x="1092" y="351"/>
<use href="#pl" x="1089" y="446"/><use href="#pl" x="1071" y="463"/>
<use href="#mk" x="1130" y="418"/><use href="#iw" x="1130" y="418"/>
<use href="#mk" x="1136.6" y="403.4"/><use href="#iw" x="1136.6" y="403.4"/>
<use href="#mk" x="1103" y="459"/><use href="#iw" x="1103" y="459"/>
<use href="#mk" x="1105" y="452"/><use href="#iw" x="1105" y="452"/>
<use href="#mk" x="1109" y="442"/><use href="#iw" x="1109" y="442"/>
<use href="#mk" x="1093" y="479"/><use href="#iw" x="1093" y="479"/>
<use href="#mk" x="1031" y="469"/><use href="#iw" x="1031" y="469"/>
<use href="#mk" x="1061" y="488"/><use href="#iw" x="1061" y="488"/>
<use href="#mk" x="1045" y="482"/><use href="#iw" x="1045" y="482"/>
<use href="#mk" x="1083" y="482"/><use href="#iw" x="1083" y="482"/>
<use href="#mk" x="1096" y="508"/><use href="#iw" x="1096" y="508"/>
<use href="#mk" x="1083" y="516"/><use href="#iw" x="1083" y="516"/>
<use href="#mk" x="1087" y="540"/><use href="#iw" x="1087" y="540"/>
<use href="#mk" x="1108" y="543"/><use href="#iw" x="1108" y="543"/>
<use href="#mk" x="1115" y="545"/><use href="#iw" x="1115" y="545"/>
<use href="#mk" x="1119" y="539"/><use href="#iw" x="1119" y="539"/>
<use href="#mk" x="1062" y="546"/><use href="#iw" x="1062" y="546"/>
<use href="#mk" x="1060" y="554"/><use href="#iw" x="1060" y="554"/>
<use href="#mk" x="1088" y="562"/><use href="#iw" x="1088" y="562"/>
<use href="#mk" x="1056" y="583"/><use href="#iw" x="1056" y="583"/>
<use href="#mk" x="1063" y="587"/><use href="#iw" x="1063" y="587"/>
<use href="#mk" x="1072" y="592"/><use href="#iw" x="1072" y="592"/>
<use href="#mk" x="915" y="593"/><use href="#iw" x="915" y="593"/>
<use href="#mk" x="956" y="626"/><use href="#ir" x="956" y="626"/><circle cx="945" cy="616" r="7.2" fill="url(#by)" stroke="#777" stroke-width="0.9"/>
<use href="#mk" x="970" y="651"/><use href="#ij" x="970" y="651"/>
<use href="#mk" x="1001" y="651"/><use href="#iw" x="1001" y="651"/>
<circle cx="962" cy="640" r="7.2" fill="url(#br)" stroke="#777" stroke-width="0.9"/>
<use href="#mk" x="985" y="642"/><use href="#iw" x="985" y="642"/><circle cx="974" cy="632" r="7.2" fill="url(#bk)" stroke="#777" stroke-width="0.9"/>
<use href="#mk" x="925" y="666"/><circle cx="925" cy="666" r="18" fill="none" stroke="#d4362e" stroke-width="1.8"/><g transform="translate(925,666)" fill="url(#trg)"><rect x="-3" y="-5.5" width="17.5" height="10.5"/><path d="M-3 -3 H-9 L-13 1 L-16 1.6 V5 H-3Z"/><circle cx="-8.6" cy="6.8" r="2.4"/><circle cx="8" cy="6.8" r="2.4"/><path d="M-8.5 -1.8 L-11.5 1 H-5.5 V-1.8Z" fill="#c9d3e6"/></g>
<use href="#pl" x="917" y="657"/>
<use href="#mk" x="902" y="644"/><use href="#iw" x="902" y="644"/><use href="#pl" x="891" y="633"/>
<use href="#mk" x="765" y="572"/><use href="#iw" x="765" y="572"/>
<use href="#mk" x="761" y="619"/><use href="#iw" x="761" y="619"/>
<use href="#mk" x="769" y="640"/><use href="#ir" x="769" y="640"/><use href="#pl" x="758" y="628"/>
<use href="#mk" x="790" y="632"/><use href="#ir" x="790" y="632"/><circle cx="779" cy="620" r="7.2" fill="url(#br)" stroke="#777" stroke-width="0.9"/>
<use href="#mk" x="717" y="644"/><use href="#iw" x="717" y="644"/>
<use href="#mk" x="756" y="698"/><circle cx="756" cy="698" r="18" fill="none" stroke="#d4362e" stroke-width="1.8"/>
<use href="#mk" x="760" y="701"/><g transform="translate(760,701)"><path d="M-8 14 V-3 Q-8 -9 -2 -9 H5" fill="none" stroke="#a9bbe0" stroke-width="2.6"/><path d="M13.5 -5.5 L4 -11.5 V0.5Z" fill="#a9bbe0"/><path d="M-2.2 -13.5 Q0 -15 2.2 -13.5 L1.3 6 H-1.3Z" fill="#4463a6"/><circle cx="0" cy="12.5" r="2.7" fill="#4463a6"/></g><circle cx="749" cy="691" r="7.2" fill="url(#bg)" stroke="#777" stroke-width="0.9"/>
<use href="#mk" x="785" y="421"/><use href="#ir" x="785" y="421"/><circle cx="774" cy="410" r="7.2" fill="url(#bk)" stroke="#777" stroke-width="0.9"/>
<use href="#mk" x="912" y="410"/>
<use href="#mk" x="908" y="409"/><circle cx="908" cy="409" r="18" fill="none" stroke="#d4362e" stroke-width="1.8"/>
<use href="#mk" x="903" y="408"/>
<circle cx="884" cy="400" r="7.2" fill="url(#by)" stroke="#777" stroke-width="0.9"/>
<use href="#mk" x="897" y="427"/>
<use href="#mk" x="897" y="421"/>
<use href="#mk" x="882" y="387"/><use href="#ij" x="882" y="387"/><circle cx="871" cy="375" r="7.2" fill="url(#by)" stroke="#777" stroke-width="0.9"/>
<use href="#mk" x="897" y="411"/><use href="#iw" x="897" y="411"/>
<use href="#mt" x="881" y="389.3"/>
<use href="#mk" x="876" y="519"/><use href="#ir" x="876" y="519"/>
<circle cx="1284.7" cy="453.5" r="19.3" fill="url(#mg)" stroke="#fff" stroke-width="2.6"/><circle cx="1284.7" cy="453.5" r="19.3" fill="none" stroke="#5f7896" stroke-width="2.6" stroke-dasharray="3 3.06"/><g fill="none" stroke="#4463a6" stroke-width="1.9"><circle cx="1275.2" cy="455" r="3.7"/><circle cx="1284.2" cy="455" r="3.7"/><circle cx="1293.2" cy="455" r="3.7"/><circle cx="1279.7" cy="461" r="3.7"/><circle cx="1288.7" cy="461" r="3.7"/></g><use href="#pl" x="1271.3" y="442.4"/>
<use href="#mk" x="1268" y="478"/><use href="#ir2" x="1268" y="478"/>
<use href="#mk" x="1252" y="480"/><use href="#ij" x="1252" y="480"/><use href="#pl" x="1240" y="470"/>
<rect x="38" y="153" width="1860" height="1" fill="#a8aaa8"/><rect x="38" y="153" width="1" height="563" fill="#a8aaa8"/>
</svg>
<div class="abs" style="left:60px;top:164px;width:22px;height:23px;border-radius:11px 11px 0 0;background:linear-gradient(180deg,#8fc2d2 0%,#6aa4b8 45%,#3f7d93 100%)"></div>
<div class="abs" style="left:49px;top:186px;width:45px;height:23px;border-radius:11px;background:linear-gradient(180deg,#8fc2d2 0%,#6aa4b8 45%,#3f7d93 100%)"></div>
<div class="abs" style="left:60px;top:208px;width:22px;height:23px;border-radius:0 0 11px 11px;background:linear-gradient(180deg,#8fc2d2 0%,#6aa4b8 45%,#3f7d93 100%)"></div>
<svg class="abs" style="left:49px;top:164px" width="45" height="67" viewBox="0 0 45 67"><g fill="#fff"><path d="M22 5.5 L28.5 16.5 H15.5Z"/><path d="M22 61 L28.5 50 H15.5Z"/><path d="M5 33.5 L16 27 V40Z"/><path d="M40 33.5 L29 27 V40Z"/></g><path d="M22 23 V44" stroke="#4a8299" stroke-width="1"/></svg>
<div class="abs" style="left:60px;top:238px;width:22px;height:23px;border-radius:11px 11px 0 0;background:linear-gradient(180deg,#8fc2d2 0%,#6aa4b8 45%,#3f7d93 100%)"></div>
<svg class="abs" style="left:60px;top:238px" width="22" height="23" viewBox="0 0 22 23"><path d="M4.5 12.5H17.5M11 6V19" stroke="#fff" stroke-width="2.6"/></svg>
<div class="abs" style="left:60px;top:261px;width:22px;height:165px;background:#97a5a2;border-left:1.5px solid #2a2a2a;border-right:1.5px solid #2a2a2a"></div>
<div class="abs" style="left:60px;top:260.25px;width:22px;height:1.5px;background:#2f3333"></div>
<div class="abs" style="left:60px;top:274px;width:22px;height:1.5px;background:#2f3333"></div>
<div class="abs" style="left:60px;top:287.75px;width:22px;height:1.5px;background:#2f3333"></div>
<div class="abs" style="left:60px;top:301.5px;width:22px;height:1.5px;background:#2f3333"></div>
<div class="abs" style="left:60px;top:315.25px;width:22px;height:1.5px;background:#2f3333"></div>
<div class="abs" style="left:60px;top:329px;width:22px;height:1.5px;background:#2f3333"></div>
<div class="abs" style="left:60px;top:342.75px;width:22px;height:1.5px;background:#2f3333"></div>
<div class="abs" style="left:60px;top:356.5px;width:22px;height:1.5px;background:#2f3333"></div>
<div class="abs" style="left:60px;top:370.25px;width:22px;height:1.5px;background:#2f3333"></div>
<div class="abs" style="left:60px;top:384px;width:22px;height:1.5px;background:#2f3333"></div>
<div class="abs" style="left:60px;top:397.75px;width:22px;height:1.5px;background:#2f3333"></div>
<div class="abs" style="left:60px;top:411.5px;width:22px;height:1.5px;background:#2f3333"></div>
<div class="abs" style="left:60px;top:425.25px;width:22px;height:1.5px;background:#2f3333"></div>
<div class="abs" style="left:59px;top:366px;width:25px;height:12px;border-radius:3px;background:linear-gradient(180deg,#9ccbd9,#6fa9bd 50%,#4f8ba1)"></div>
<div class="abs" style="left:60px;top:426px;width:22px;height:23px;border-radius:0 0 11px 11px;background:linear-gradient(180deg,#8fc2d2 0%,#6aa4b8 45%,#3f7d93 100%)"></div>
<svg class="abs" style="left:60px;top:426px" width="22" height="23" viewBox="0 0 22 23"><path d="M4.5 10H17.5" stroke="#fff" stroke-width="2.6"/></svg>
<div class="abs" style="left:54px;top:491px;width:36px;height:35px;border-radius:3px;background:linear-gradient(180deg,#7fb2c4,#4f8ba1 60%,#3f7d93);border:1px solid #6b9fb0"></div>
<svg class="abs" style="left:54px;top:491px" width="36" height="35" viewBox="0 0 36 35"><circle cx="17" cy="16" r="9.5" fill="none" stroke="#fff" stroke-width="3"/><path d="M24 23 L32.5 31" stroke="#fff" stroke-width="4" stroke-linecap="round"/><path d="M12.5 16H21.5M17 11.5V20.5" stroke="#fff" stroke-width="2.4"/></svg>
<div class="abs" style="left:1832px;top:175px;width:52px;height:39px;border-radius:9px;background:#fff;box-shadow:1px 1px 1px #999"></div>
<svg class="abs" style="left:1832px;top:175px" width="52" height="39" viewBox="0 0 52 39"><defs><linearGradient id="lg1" x1="0" y1="0" x2="0" y2="1"><stop offset="0" stop-color="#f0f0f0"/><stop offset="1" stop-color="#8e8e8e"/></linearGradient></defs>
<g stroke="#7a7a7a" stroke-width=".9" fill="url(#lg1)"><path d="M25 15.2 L41.3 24.7 L25 34.2 L8.7 24.7Z"/><path d="M25 9 L41.3 18.5 L25 28 L8.7 18.5Z"/><path d="M25 2.8 L41.3 12.3 L25 21.8 L8.7 12.3Z"/></g></svg>
<div class="abs" style="left:1839px;top:670px;width:55px;height:30px;border-radius:9px;background:#fff"></div>
<svg class="abs" style="left:1839px;top:670px" width="55" height="30" viewBox="0 0 55 30"><path d="M13.8 4.2 H21 L19.7 9.2 Q18.8 11.8 16.1 11.8 H5.2 L5.8 9.2 H12.1Z" fill="#00508f"/><path d="M4.8 13.4 H21.9 L21.4 16.4 H4.3Z" fill="#1b86d0"/><path d="M20 18.1 H10.1 Q7.3 18.4 6.5 21 L5.2 24.3 Q5.4 25.7 7.2 25.7 H11.8 L13.1 21.7 Q13.5 20.4 15 20.4 H19.4Z" fill="#00508f"/>
<text x="23" y="20.4" font-family="Liberation Sans,Arial,sans-serif" font-style="italic" font-size="15.2" fill="#00508f" stroke="#00508f" stroke-width="0.5" textLength="28" lengthAdjust="spacingAndGlyphs">DGT</text></svg>
<div class="abs" style="left:42px;top:700px;font-size:10.4px;line-height:12px;color:#111;white-space:nowrap">Data CC-By-SA by <span style="color:#0000ee;text-decoration:underline">OpenStreetMap</span></div>
<div class="abs" id="bbar"></div><div class="abs" id="strip"></div>
<div class="abs cb" style="left:60px;top:725px"><svg class="abs" style="left:0;top:0" width="15" height="15" viewBox="0 0 15 15"><path d="M3.2 7.8 L6.2 10.8 L11.8 4.2" fill="none" stroke="#fff" stroke-width="2.1" stroke-linecap="butt" stroke-linejoin="miter"/></svg></div>
<svg class="abs" style="left:89px;top:725px" width="9" height="23" viewBox="0 0 9 23"><rect width="9" height="23" fill="#3a5f7a"/><circle cx="4.5" cy="4" r="2.6" fill="#2fe08a"/><circle cx="4.5" cy="11.5" r="2.6" fill="#f5b52a"/><circle cx="4.5" cy="19" r="2.6" fill="#f0301a"/></svg>
<div class="abs btxt" style="left:101px;top:724px">Niveles de circulación</div>
<div class="abs cb" style="left:1175px;top:725px"><svg class="abs" style="left:0;top:0" width="15" height="15" viewBox="0 0 15 15"><path d="M3.2 7.8 L6.2 10.8 L11.8 4.2" fill="none" stroke="#fff" stroke-width="2.1" stroke-linecap="butt" stroke-linejoin="miter"/></svg></div>
<svg class="abs" style="left:1197px;top:724px" width="20" height="17" viewBox="0 0 20 17"><rect x="1" y="1" width="15" height="11" rx="1" fill="#f4f0ee" stroke="#6a4a44" stroke-width="1"/><path d="M3 12 L3 15.5 L7 12Z" fill="#6a4a44"/><rect x="7.5" y="5.5" width="2.4" height="5" fill="#4a3030"/><rect x="7.5" y="2.5" width="2.4" height="2" fill="#4a3030"/></svg>
<div class="abs btxt" style="left:1221px;top:724px">Info sensores</div>
<div class="abs cb" style="left:1313px;top:725px"><svg class="abs" style="left:0;top:0" width="15" height="15" viewBox="0 0 15 15"><path d="M3.2 7.8 L6.2 10.8 L11.8 4.2" fill="none" stroke="#fff" stroke-width="2.1" stroke-linecap="butt" stroke-linejoin="miter"/></svg></div>
<svg class="abs" style="left:1337px;top:724px" width="20" height="17" viewBox="0 0 20 17"><path d="M1 2 H12 V9 H8 L9 12 H6.5 L5 9 H3 Z" fill="#f4f0ee" stroke="#6a4a44" stroke-width="1"/><rect x="4" y="12" width="7" height="2.5" fill="#6a4a44"/><rect x="13.5" y="2" width="1.5" height="4" fill="#f4f0ee"/><rect x="16" y="2" width="1.5" height="4" fill="#f4f0ee"/></svg>
<div class="abs btxt" style="left:1360px;top:724px">Cámaras</div>
<div class="abs cb" style="left:1426px;top:725px"><svg class="abs" style="left:0;top:0" width="15" height="15" viewBox="0 0 15 15"><path d="M3.2 7.8 L6.2 10.8 L11.8 4.2" fill="none" stroke="#fff" stroke-width="2.1" stroke-linecap="butt" stroke-linejoin="miter"/></svg></div>
<svg class="abs" style="left:1448px;top:724px" width="20" height="17" viewBox="0 0 20 17"><rect x="1.5" y="1.5" width="15" height="9" fill="#f4f0ee" stroke="#6a4a44" stroke-width="1.2"/><path d="M4 4.5H14M4 7.5H14" stroke="#6a4a44" stroke-width="1.2"/><path d="M4.5 10.5V15.5M13.5 10.5V15.5" stroke="#f4f0ee" stroke-width="1.8"/></svg>
<div class="abs btxt" style="left:1472px;top:724px">Paneles</div>
<div class="abs cb" style="left:1532px;top:725px"><svg class="abs" style="left:0;top:0" width="15" height="15" viewBox="0 0 15 15"><path d="M3.2 7.8 L6.2 10.8 L11.8 4.2" fill="none" stroke="#fff" stroke-width="2.1" stroke-linecap="butt" stroke-linejoin="miter"/></svg></div>
<svg class="abs" style="left:1555px;top:724px" width="20" height="17" viewBox="0 0 20 17"><circle cx="2.5" cy="8" r="1.5" fill="#f4f0ee"/><path d="M5.5 5 Q8 8 5.5 11" fill="none" stroke="#f4f0ee" stroke-width="1.5"/><path d="M8.5 3 Q12.5 8 8.5 13" fill="none" stroke="#f4f0ee" stroke-width="1.7"/><path d="M11.5 1 Q17.5 8 11.5 15" fill="none" stroke="#f4f0ee" stroke-width="2"/></svg>
<div class="abs btxt" style="left:1578px;top:724px">Radares</div>
<div class="abs cb" style="left:1640px;top:725px"><svg class="abs" style="left:0;top:0" width="15" height="15" viewBox="0 0 15 15"><path d="M3.2 7.8 L6.2 10.8 L11.8 4.2" fill="none" stroke="#fff" stroke-width="2.1" stroke-linecap="butt" stroke-linejoin="miter"/></svg></div>
<svg class="abs" style="left:1664px;top:724px" width="20" height="17" viewBox="0 0 20 17"><circle cx="7.5" cy="6.5" r="3.2" fill="#f0c040"/><path d="M7.5 0.5V2M2 6.5H3.5M3.5 2.5L4.6 3.6M11.5 2.5L10.4 3.6" stroke="#f4f0ee" stroke-width="1.2"/><path d="M5 15 Q2 15 3 12 Q4 10 7 11 Q9 7.5 13 9.5 Q15 10 15 12 Q19 12 18 15Z" fill="#f4f0ee" stroke="#6a4a44" stroke-width=".8"/></svg>
<div class="abs btxt" style="left:1687px;top:724px">Estaciones meteorológicas</div>
<div class="abs bsep" style="left:1305px"></div>
<div class="abs bsep" style="left:1417px"></div>
<div class="abs bsep" style="left:1523px"></div>
<div class="abs bsep" style="left:1632px"></div>
</body></html>
